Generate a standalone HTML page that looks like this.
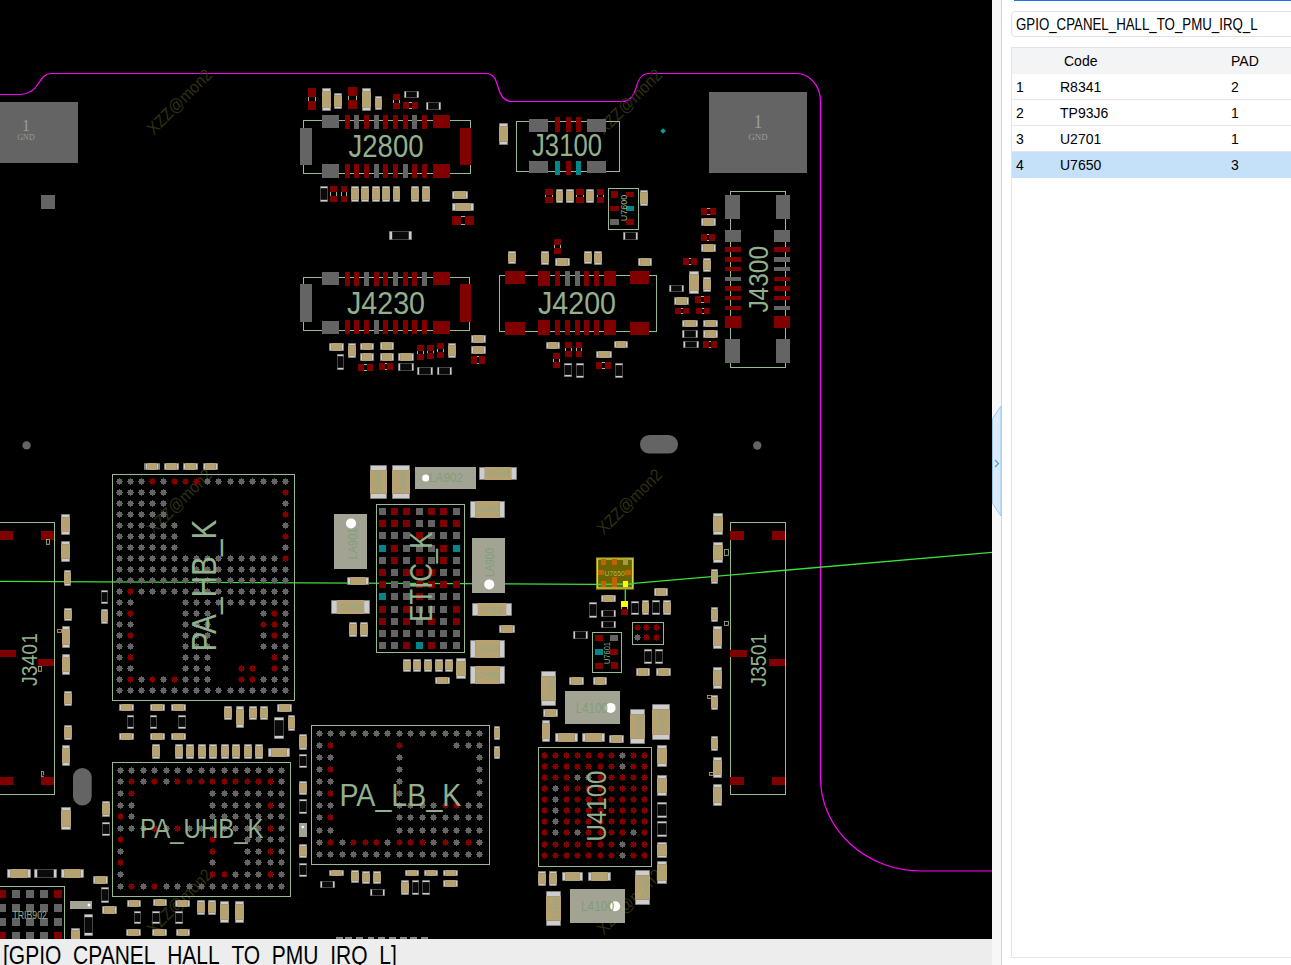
<!DOCTYPE html>
<html><head><meta charset="utf-8"><style>
html,body{margin:0;padding:0;width:1291px;height:965px;overflow:hidden;background:#fff;font-family:"Liberation Sans",sans-serif;}
#board{position:absolute;left:0;top:0;width:992px;height:939px;background:#000;}
#board svg{position:absolute;left:0;top:0;}
#status{position:absolute;left:0;top:939px;width:992px;height:26px;background:#ededed;white-space:nowrap;overflow:hidden;}
#strip{position:absolute;left:992px;top:0;width:9px;height:965px;background:#f7f7f7;border-right:1px solid #d4d4d4;}
#gap{position:absolute;left:1002px;top:0;width:9px;height:965px;background:#fff;border-right:1px solid #d9d9d9;}
#panel{position:absolute;left:1002px;top:0;width:289px;height:965px;background:#fff;}
#topline{position:absolute;left:1014px;top:0;width:277px;height:1px;background:#1a73e8;}
#combo{position:absolute;left:1011px;top:11px;width:290px;height:26px;border:1px solid #e0e0e0;border-radius:4px;background:#fff;font-size:16px;line-height:26px;padding-left:4px;box-sizing:border-box;}
#tbl{position:absolute;left:1011px;top:47px;width:290px;height:911px;border:1px solid #e4e4e4;background:#fff;box-sizing:border-box;}
.row{position:absolute;left:0;width:290px;height:26px;font-size:14px;line-height:26px;border-bottom:1px solid #e6e6e6;box-sizing:border-box;}
.row span{position:absolute;top:0;}
</style></head><body>
<div id="board"><svg width="992" height="939" viewBox="0 0 992 939" font-family="Liberation Sans">
<path d="M0,94.5 L20,94.5 C30,94.3 35,89 38,84 C42,78 45,73.5 51,73.5 L486,73.5 C494,73.5 496,80 498,87 C500,95 504,101.5 512,101.5 L622,101.5 C630,101.5 634,95 636,88 C638,80 641,73.5 649,73.5 L796.5,73.5 A24 28 0 0 1 820.5,101.5 L820.5,778 A101 93 0 0 0 921.5,871 L992,871" fill="none" stroke="#ff00ff" stroke-width="1.2"/>
<path d="M0,581.3 L596,584.4" stroke="#3ce03c" stroke-width="1.3" fill="none"/>
<path d="M633.6,583.4 L992,552.3" stroke="#3ce03c" stroke-width="1.3" fill="none"/>
<path d="M625.3,587 L625.3,601.4" stroke="#3ce03c" stroke-width="1.3" fill="none"/>
<text x="153.8" y="135.5" font-size="17" fill="#302f12" text-anchor="start" textLength="84" lengthAdjust="spacingAndGlyphs" transform="rotate(-45 153.8 135.5)" >XZZ@mon2</text>
<text x="603.8" y="135.5" font-size="17" fill="#302f12" text-anchor="start" textLength="84" lengthAdjust="spacingAndGlyphs" transform="rotate(-45 603.8 135.5)" >XZZ@mon2</text>
<text x="153.8" y="535.3" font-size="17" fill="#302f12" text-anchor="start" textLength="84" lengthAdjust="spacingAndGlyphs" transform="rotate(-45 153.8 535.3)" >XZZ@mon2</text>
<text x="603.8" y="535.3" font-size="17" fill="#302f12" text-anchor="start" textLength="84" lengthAdjust="spacingAndGlyphs" transform="rotate(-45 603.8 535.3)" >XZZ@mon2</text>
<text x="153.8" y="935.4" font-size="17" fill="#302f12" text-anchor="start" textLength="84" lengthAdjust="spacingAndGlyphs" transform="rotate(-45 153.8 935.4)" >XZZ@mon2</text>
<text x="603.8" y="935.4" font-size="17" fill="#302f12" text-anchor="start" textLength="84" lengthAdjust="spacingAndGlyphs" transform="rotate(-45 603.8 935.4)" >XZZ@mon2</text>
<rect x="0" y="102" width="78" height="61" fill="#646464"/>
<text x="26" y="131" font-size="16" fill="#9a9a9a" text-anchor="middle" font-family="Liberation Serif">1</text>
<text x="26" y="140" font-size="8" fill="#9a9a9a" text-anchor="middle" font-family="Liberation Serif">GND</text>
<rect x="41" y="195" width="14" height="14" fill="#646464"/>
<rect x="709" y="92" width="98" height="81" fill="#646464"/>
<text x="758" y="128" font-size="18" fill="#9a9a9a" text-anchor="middle" font-family="Liberation Serif">1</text>
<text x="758" y="140" font-size="9" fill="#9a9a9a" text-anchor="middle" font-family="Liberation Serif">GND</text>
<rect x="308.5" y="96.5" width="7" height="5" fill="none" stroke="#96ba92" stroke-width="1"/>
<rect x="308" y="88" width="8" height="9" fill="#800000"/>
<rect x="308" y="101" width="8" height="9" fill="#800000"/>
<rect x="322.0" y="88.0" width="9.0" height="23.0" fill="#5e5e5e"/>
<rect x="322.7" y="88.7" width="7.6" height="2.8" fill="#cdcdcd"/>
<rect x="322.7" y="107.5" width="7.6" height="2.8" fill="#cdcdcd"/>
<rect x="322.0" y="91.5" width="9.0" height="16.1" fill="#b6a171"/>
<rect x="334.0" y="93.0" width="8.0" height="16.0" fill="#5e5e5e"/>
<rect x="334.7" y="93.7" width="6.6" height="1.7" fill="#cdcdcd"/>
<rect x="334.7" y="106.6" width="6.6" height="1.7" fill="#cdcdcd"/>
<rect x="334.0" y="95.4" width="8.0" height="11.2" fill="#b6a171"/>
<rect x="348.5" y="95.5" width="8" height="5" fill="none" stroke="#96ba92" stroke-width="1"/>
<rect x="348" y="87" width="9" height="9" fill="#800000"/>
<rect x="348" y="100" width="9" height="9" fill="#800000"/>
<rect x="362.0" y="88.0" width="9.0" height="23.0" fill="#5e5e5e"/>
<rect x="362.7" y="88.7" width="7.6" height="2.8" fill="#cdcdcd"/>
<rect x="362.7" y="107.5" width="7.6" height="2.8" fill="#cdcdcd"/>
<rect x="362.0" y="91.5" width="9.0" height="16.1" fill="#b6a171"/>
<rect x="375.0" y="96.0" width="7.0" height="14.0" fill="#5e5e5e"/>
<rect x="375.7" y="96.7" width="5.6" height="1.5" fill="#cdcdcd"/>
<rect x="375.7" y="107.8" width="5.6" height="1.5" fill="#cdcdcd"/>
<rect x="375.0" y="98.2" width="7.0" height="9.6" fill="#b6a171"/>
<rect x="393.5" y="99.5" width="6" height="4" fill="none" stroke="#96ba92" stroke-width="1"/>
<rect x="393" y="94" width="7" height="6" fill="#800000"/>
<rect x="393" y="103" width="7" height="6" fill="#800000"/>
<rect x="404.0" y="91.0" width="15.0" height="7.0" fill="#5e5e5e"/>
<rect x="404.7" y="91.7" width="1.6" height="5.6" fill="#cdcdcd"/>
<rect x="416.8" y="91.7" width="1.6" height="5.6" fill="#cdcdcd"/>
<rect x="406.2" y="91.7" width="10.5" height="5.6" fill="#0a0a0a"/>
<rect x="408.5" y="102.5" width="4" height="6" fill="none" stroke="#96ba92" stroke-width="1"/>
<rect x="403" y="102" width="6" height="7" fill="#800000"/>
<rect x="412" y="102" width="6" height="7" fill="#800000"/>
<rect x="426.0" y="102.0" width="15.0" height="8.0" fill="#5e5e5e"/>
<rect x="426.7" y="102.7" width="1.6" height="6.6" fill="#cdcdcd"/>
<rect x="438.8" y="102.7" width="1.6" height="6.6" fill="#cdcdcd"/>
<rect x="428.2" y="102.7" width="10.5" height="6.6" fill="#0a0a0a"/>
<rect x="303.5" y="120.5" width="167" height="53" fill="none" stroke="#96ba92" stroke-width="1"/>
<rect x="300" y="128" width="12" height="37" fill="#646464"/>
<rect x="460" y="128" width="11" height="37" fill="#800000"/>
<rect x="322" y="115" width="17" height="13" fill="#646464"/>
<rect x="433" y="115" width="17" height="13" fill="#800000"/>
<rect x="322" y="164" width="17" height="14" fill="#646464"/>
<rect x="433" y="164" width="17" height="14" fill="#800000"/>
<rect x="345" y="115" width="5" height="14" fill="#800000"/>
<rect x="354" y="115" width="5" height="14" fill="#646464"/>
<rect x="364" y="115" width="5" height="14" fill="#800000"/>
<rect x="374" y="115" width="5" height="14" fill="#646464"/>
<rect x="383" y="115" width="5" height="14" fill="#800000"/>
<rect x="393" y="115" width="5" height="14" fill="#800000"/>
<rect x="403" y="115" width="5" height="14" fill="#800000"/>
<rect x="412" y="115" width="5" height="14" fill="#646464"/>
<rect x="422" y="115" width="5" height="14" fill="#800000"/>
<rect x="345" y="164" width="5" height="14" fill="#800000"/>
<rect x="354" y="164" width="5" height="14" fill="#800000"/>
<rect x="364" y="164" width="5" height="14" fill="#800000"/>
<rect x="374" y="164" width="5" height="14" fill="#646464"/>
<rect x="383" y="164" width="5" height="14" fill="#800000"/>
<rect x="393" y="164" width="5" height="14" fill="#800000"/>
<rect x="403" y="164" width="5" height="14" fill="#646464"/>
<rect x="412" y="164" width="5" height="14" fill="#800000"/>
<rect x="422" y="164" width="5" height="14" fill="#800000"/>
<text x="348.5" y="156.5" font-size="30.5" fill="#92b08c" text-anchor="start" textLength="75" lengthAdjust="spacingAndGlyphs" >J2800</text>
<rect x="320.0" y="186.0" width="8.0" height="16.0" fill="#5e5e5e"/>
<rect x="320.7" y="186.7" width="6.6" height="1.6" fill="#cdcdcd"/>
<rect x="320.7" y="199.7" width="6.6" height="1.6" fill="#cdcdcd"/>
<rect x="320.7" y="188.3" width="6.6" height="11.4" fill="#0a0a0a"/>
<rect x="330.5" y="191.5" width="6" height="5" fill="none" stroke="#96ba92" stroke-width="1"/>
<rect x="330" y="186" width="7" height="6" fill="#800000"/>
<rect x="330" y="196" width="7" height="6" fill="#800000"/>
<rect x="341.5" y="191.5" width="5" height="5" fill="none" stroke="#96ba92" stroke-width="1"/>
<rect x="341" y="186" width="6" height="6" fill="#800000"/>
<rect x="341" y="196" width="6" height="6" fill="#800000"/>
<rect x="351.0" y="186.0" width="8.0" height="16.0" fill="#5e5e5e"/>
<rect x="351.7" y="186.7" width="6.6" height="1.6" fill="#cdcdcd"/>
<rect x="351.7" y="199.7" width="6.6" height="1.6" fill="#cdcdcd"/>
<rect x="351.0" y="188.3" width="8.0" height="11.4" fill="#b6a171"/>
<rect x="361.0" y="186.0" width="8.0" height="16.0" fill="#5e5e5e"/>
<rect x="361.7" y="186.7" width="6.6" height="1.6" fill="#cdcdcd"/>
<rect x="361.7" y="199.7" width="6.6" height="1.6" fill="#cdcdcd"/>
<rect x="361.0" y="188.3" width="8.0" height="11.4" fill="#b6a171"/>
<rect x="372.0" y="186.0" width="8.0" height="16.0" fill="#5e5e5e"/>
<rect x="372.7" y="186.7" width="6.6" height="1.6" fill="#cdcdcd"/>
<rect x="372.7" y="199.7" width="6.6" height="1.6" fill="#cdcdcd"/>
<rect x="372.0" y="188.3" width="8.0" height="11.4" fill="#b6a171"/>
<rect x="382.0" y="186.0" width="8.0" height="16.0" fill="#5e5e5e"/>
<rect x="382.7" y="186.7" width="6.6" height="1.6" fill="#cdcdcd"/>
<rect x="382.7" y="199.7" width="6.6" height="1.6" fill="#cdcdcd"/>
<rect x="382.0" y="188.3" width="8.0" height="11.4" fill="#b6a171"/>
<rect x="393.0" y="186.0" width="7.0" height="16.0" fill="#5e5e5e"/>
<rect x="393.7" y="186.7" width="5.6" height="1.6" fill="#cdcdcd"/>
<rect x="393.7" y="199.7" width="5.6" height="1.6" fill="#cdcdcd"/>
<rect x="393.0" y="188.3" width="7.0" height="11.4" fill="#b6a171"/>
<rect x="411.0" y="186.0" width="8.0" height="16.0" fill="#5e5e5e"/>
<rect x="411.7" y="186.7" width="6.6" height="1.6" fill="#cdcdcd"/>
<rect x="411.7" y="199.7" width="6.6" height="1.6" fill="#cdcdcd"/>
<rect x="411.0" y="188.3" width="8.0" height="11.4" fill="#b6a171"/>
<rect x="422.0" y="186.0" width="8.0" height="16.0" fill="#5e5e5e"/>
<rect x="422.7" y="186.7" width="6.6" height="1.6" fill="#cdcdcd"/>
<rect x="422.7" y="199.7" width="6.6" height="1.6" fill="#cdcdcd"/>
<rect x="422.0" y="188.3" width="8.0" height="11.4" fill="#b6a171"/>
<rect x="452.0" y="191.0" width="16.0" height="8.0" fill="#5e5e5e"/>
<rect x="452.7" y="191.7" width="1.6" height="6.6" fill="#cdcdcd"/>
<rect x="465.8" y="191.7" width="1.6" height="6.6" fill="#cdcdcd"/>
<rect x="454.2" y="191.0" width="11.5" height="8.0" fill="#b6a171"/>
<rect x="452.0" y="203.0" width="22.0" height="8.0" fill="#5e5e5e"/>
<rect x="452.7" y="203.7" width="2.6" height="6.6" fill="#cdcdcd"/>
<rect x="470.7" y="203.7" width="2.6" height="6.6" fill="#cdcdcd"/>
<rect x="455.3" y="203.0" width="15.3" height="8.0" fill="#b6a171"/>
<rect x="460.5" y="216.5" width="5" height="8" fill="none" stroke="#96ba92" stroke-width="1"/>
<rect x="452" y="216" width="9" height="9" fill="#800000"/>
<rect x="465" y="216" width="9" height="9" fill="#800000"/>
<rect x="389.0" y="231.0" width="23.0" height="9.0" fill="#5e5e5e"/>
<rect x="389.7" y="231.7" width="2.6" height="7.6" fill="#cdcdcd"/>
<rect x="408.7" y="231.7" width="2.6" height="7.6" fill="#cdcdcd"/>
<rect x="392.3" y="231.7" width="16.3" height="7.6" fill="#0a0a0a"/>
<rect x="499.0" y="123.0" width="9.0" height="22.0" fill="#5e5e5e"/>
<rect x="499.7" y="123.7" width="7.6" height="2.6" fill="#cdcdcd"/>
<rect x="499.7" y="141.7" width="7.6" height="2.6" fill="#cdcdcd"/>
<rect x="499.0" y="126.3" width="9.0" height="15.3" fill="#b6a171"/>
<rect x="516.5" y="121.5" width="103" height="50" fill="none" stroke="#96ba92" stroke-width="1"/>
<rect x="529" y="119" width="19" height="13" fill="#646464"/>
<rect x="587" y="119" width="19" height="13" fill="#646464"/>
<rect x="555" y="117" width="5" height="15" fill="#800000"/>
<rect x="566" y="117" width="5" height="15" fill="#800000"/>
<rect x="576" y="117" width="5" height="15" fill="#800000"/>
<rect x="529" y="161" width="19" height="12" fill="#646464"/>
<rect x="587" y="161" width="19" height="12" fill="#646464"/>
<rect x="555" y="161" width="5" height="14" fill="#00868b"/>
<rect x="566" y="161" width="5" height="14" fill="#800000"/>
<rect x="576" y="161" width="5" height="14" fill="#00868b"/>
<text x="532" y="156" font-size="30.5" fill="#92b08c" text-anchor="start" textLength="70" lengthAdjust="spacingAndGlyphs" >J3100</text>
<rect x="661" y="129" width="4" height="4" fill="#00a0a0" transform="rotate(45 663 131)"/>
<rect x="545.5" y="194.5" width="7" height="3" fill="none" stroke="#96ba92" stroke-width="1"/>
<rect x="545" y="189" width="8" height="6" fill="#800000"/>
<rect x="545" y="197" width="8" height="6" fill="#800000"/>
<rect x="556.0" y="189.0" width="7.0" height="14.0" fill="#5e5e5e"/>
<rect x="556.7" y="189.7" width="5.6" height="1.5" fill="#cdcdcd"/>
<rect x="556.7" y="200.8" width="5.6" height="1.5" fill="#cdcdcd"/>
<rect x="556.0" y="191.2" width="7.0" height="9.6" fill="#b6a171"/>
<rect x="566.0" y="189.0" width="8.0" height="14.0" fill="#5e5e5e"/>
<rect x="566.7" y="189.7" width="6.6" height="1.5" fill="#cdcdcd"/>
<rect x="566.7" y="200.8" width="6.6" height="1.5" fill="#cdcdcd"/>
<rect x="566.0" y="191.2" width="8.0" height="9.6" fill="#b6a171"/>
<rect x="576.5" y="194.5" width="7" height="3" fill="none" stroke="#96ba92" stroke-width="1"/>
<rect x="576" y="189" width="8" height="6" fill="#800000"/>
<rect x="576" y="197" width="8" height="6" fill="#800000"/>
<rect x="586.0" y="189.0" width="8.0" height="14.0" fill="#5e5e5e"/>
<rect x="586.7" y="189.7" width="6.6" height="1.5" fill="#cdcdcd"/>
<rect x="586.7" y="200.8" width="6.6" height="1.5" fill="#cdcdcd"/>
<rect x="586.0" y="191.2" width="8.0" height="9.6" fill="#b6a171"/>
<rect x="597.5" y="194.5" width="6" height="3" fill="none" stroke="#96ba92" stroke-width="1"/>
<rect x="597" y="189" width="7" height="6" fill="#800000"/>
<rect x="597" y="197" width="7" height="6" fill="#800000"/>
<rect x="608.5" y="188.5" width="30" height="41" fill="none" stroke="#96ba92" stroke-width="1"/>
<rect x="611" y="191" width="7" height="7" fill="#800000"/>
<rect x="626" y="192" width="8" height="5" fill="#800000"/>
<rect x="610" y="206" width="9" height="5" fill="#800000"/>
<rect x="626" y="206" width="8" height="5" fill="#00868b"/>
<rect x="610" y="219" width="9" height="6" fill="#646464"/>
<rect x="626" y="219" width="8" height="6" fill="#800000"/>
<text x="627" y="208" font-size="9" fill="#92b08c" text-anchor="middle" transform="rotate(-90 627 208)" >U7600</text>
<rect x="640.0" y="190.0" width="8.0" height="16.0" fill="#5e5e5e"/>
<rect x="640.7" y="190.7" width="6.6" height="1.6" fill="#cdcdcd"/>
<rect x="640.7" y="203.7" width="6.6" height="1.6" fill="#cdcdcd"/>
<rect x="640.0" y="192.3" width="8.0" height="11.4" fill="#b6a171"/>
<rect x="623.0" y="232.0" width="15.0" height="8.0" fill="#5e5e5e"/>
<rect x="623.7" y="232.7" width="1.6" height="6.6" fill="#cdcdcd"/>
<rect x="635.7" y="232.7" width="1.6" height="6.6" fill="#cdcdcd"/>
<rect x="625.3" y="232.7" width="10.5" height="6.6" fill="#0a0a0a"/>
<rect x="554.5" y="244.5" width="6" height="4" fill="none" stroke="#96ba92" stroke-width="1"/>
<rect x="554" y="239" width="7" height="6" fill="#800000"/>
<rect x="554" y="248" width="7" height="6" fill="#800000"/>
<rect x="303.5" y="277.5" width="166" height="53" fill="none" stroke="#96ba92" stroke-width="1"/>
<rect x="300" y="284" width="12" height="38" fill="#646464"/>
<rect x="460" y="284" width="11" height="38" fill="#800000"/>
<rect x="322" y="272" width="17" height="13" fill="#646464"/>
<rect x="433" y="272" width="17" height="13" fill="#800000"/>
<rect x="322" y="321" width="17" height="13" fill="#646464"/>
<rect x="433" y="321" width="17" height="13" fill="#800000"/>
<rect x="345" y="272" width="5" height="14" fill="#800000"/>
<rect x="354" y="272" width="5" height="14" fill="#800000"/>
<rect x="364" y="272" width="5" height="14" fill="#646464"/>
<rect x="374" y="272" width="5" height="14" fill="#800000"/>
<rect x="383" y="272" width="5" height="14" fill="#800000"/>
<rect x="393" y="272" width="5" height="14" fill="#646464"/>
<rect x="403" y="272" width="5" height="14" fill="#800000"/>
<rect x="412" y="272" width="5" height="14" fill="#800000"/>
<rect x="422" y="272" width="5" height="14" fill="#646464"/>
<rect x="345" y="320" width="5" height="14" fill="#800000"/>
<rect x="354" y="320" width="5" height="14" fill="#800000"/>
<rect x="364" y="320" width="5" height="14" fill="#800000"/>
<rect x="374" y="320" width="5" height="14" fill="#646464"/>
<rect x="383" y="320" width="5" height="14" fill="#800000"/>
<rect x="393" y="320" width="5" height="14" fill="#800000"/>
<rect x="403" y="320" width="5" height="14" fill="#800000"/>
<rect x="412" y="320" width="5" height="14" fill="#800000"/>
<rect x="422" y="320" width="5" height="14" fill="#800000"/>
<text x="347" y="314" font-size="31" fill="#92b08c" text-anchor="start" textLength="78" lengthAdjust="spacingAndGlyphs" >J4230</text>
<rect x="329.0" y="343.0" width="15.0" height="8.0" fill="#5e5e5e"/>
<rect x="329.7" y="343.7" width="1.6" height="6.6" fill="#cdcdcd"/>
<rect x="341.7" y="343.7" width="1.6" height="6.6" fill="#cdcdcd"/>
<rect x="331.3" y="343.0" width="10.5" height="8.0" fill="#b6a171"/>
<rect x="348.0" y="343.0" width="8.0" height="15.0" fill="#5e5e5e"/>
<rect x="348.7" y="343.7" width="6.6" height="1.6" fill="#cdcdcd"/>
<rect x="348.7" y="355.7" width="6.6" height="1.6" fill="#cdcdcd"/>
<rect x="348.0" y="345.3" width="8.0" height="10.5" fill="#b6a171"/>
<rect x="337.0" y="354.0" width="7.0" height="16.0" fill="#5e5e5e"/>
<rect x="337.7" y="354.7" width="5.6" height="1.6" fill="#cdcdcd"/>
<rect x="337.7" y="367.7" width="5.6" height="1.6" fill="#cdcdcd"/>
<rect x="337.7" y="356.3" width="5.6" height="11.4" fill="#0a0a0a"/>
<rect x="360.0" y="343.0" width="14.0" height="7.0" fill="#5e5e5e"/>
<rect x="360.7" y="343.7" width="1.5" height="5.6" fill="#cdcdcd"/>
<rect x="371.8" y="343.7" width="1.5" height="5.6" fill="#cdcdcd"/>
<rect x="362.2" y="343.0" width="9.6" height="7.0" fill="#b6a171"/>
<rect x="360.0" y="353.0" width="14.0" height="8.0" fill="#5e5e5e"/>
<rect x="360.7" y="353.7" width="1.5" height="6.6" fill="#cdcdcd"/>
<rect x="371.8" y="353.7" width="1.5" height="6.6" fill="#cdcdcd"/>
<rect x="362.2" y="353.0" width="9.6" height="8.0" fill="#b6a171"/>
<rect x="363.5" y="364.5" width="4" height="6" fill="none" stroke="#96ba92" stroke-width="1"/>
<rect x="358" y="364" width="6" height="7" fill="#800000"/>
<rect x="367" y="364" width="6" height="7" fill="#800000"/>
<rect x="380.0" y="342.0" width="14.0" height="8.0" fill="#5e5e5e"/>
<rect x="380.7" y="342.7" width="1.5" height="6.6" fill="#cdcdcd"/>
<rect x="391.8" y="342.7" width="1.5" height="6.6" fill="#cdcdcd"/>
<rect x="382.2" y="342.0" width="9.6" height="8.0" fill="#b6a171"/>
<rect x="380.0" y="353.0" width="14.0" height="8.0" fill="#5e5e5e"/>
<rect x="380.7" y="353.7" width="1.5" height="6.6" fill="#cdcdcd"/>
<rect x="391.8" y="353.7" width="1.5" height="6.6" fill="#cdcdcd"/>
<rect x="382.2" y="353.0" width="9.6" height="8.0" fill="#b6a171"/>
<rect x="384.5" y="363.5" width="3" height="6" fill="none" stroke="#96ba92" stroke-width="1"/>
<rect x="379" y="363" width="6" height="7" fill="#800000"/>
<rect x="387" y="363" width="6" height="7" fill="#800000"/>
<rect x="398.0" y="353.0" width="16.0" height="8.0" fill="#5e5e5e"/>
<rect x="398.7" y="353.7" width="1.6" height="6.6" fill="#cdcdcd"/>
<rect x="411.7" y="353.7" width="1.6" height="6.6" fill="#cdcdcd"/>
<rect x="400.3" y="353.0" width="11.5" height="8.0" fill="#b6a171"/>
<rect x="398.0" y="363.0" width="16.0" height="8.0" fill="#5e5e5e"/>
<rect x="398.7" y="363.7" width="1.6" height="6.6" fill="#cdcdcd"/>
<rect x="411.7" y="363.7" width="1.6" height="6.6" fill="#cdcdcd"/>
<rect x="400.3" y="363.7" width="11.5" height="6.6" fill="#0a0a0a"/>
<rect x="417.5" y="350.5" width="6" height="4" fill="none" stroke="#96ba92" stroke-width="1"/>
<rect x="417" y="345" width="7" height="6" fill="#800000"/>
<rect x="417" y="354" width="7" height="6" fill="#800000"/>
<rect x="427.5" y="350.5" width="6" height="3" fill="none" stroke="#96ba92" stroke-width="1"/>
<rect x="427" y="345" width="7" height="6" fill="#800000"/>
<rect x="427" y="353" width="7" height="6" fill="#800000"/>
<rect x="437.5" y="348.5" width="6" height="4" fill="none" stroke="#96ba92" stroke-width="1"/>
<rect x="437" y="343" width="7" height="6" fill="#800000"/>
<rect x="437" y="352" width="7" height="6" fill="#800000"/>
<rect x="448.0" y="343.0" width="8.0" height="15.0" fill="#5e5e5e"/>
<rect x="448.7" y="343.7" width="6.6" height="1.6" fill="#cdcdcd"/>
<rect x="448.7" y="355.7" width="6.6" height="1.6" fill="#cdcdcd"/>
<rect x="448.0" y="345.3" width="8.0" height="10.4" fill="#b6a171"/>
<rect x="417.0" y="367.0" width="16.0" height="8.0" fill="#5e5e5e"/>
<rect x="417.7" y="367.7" width="1.6" height="6.6" fill="#cdcdcd"/>
<rect x="430.7" y="367.7" width="1.6" height="6.6" fill="#cdcdcd"/>
<rect x="419.3" y="367.7" width="11.4" height="6.6" fill="#0a0a0a"/>
<rect x="437.0" y="367.0" width="15.0" height="8.0" fill="#5e5e5e"/>
<rect x="437.7" y="367.7" width="1.5" height="6.6" fill="#cdcdcd"/>
<rect x="449.8" y="367.7" width="1.5" height="6.6" fill="#cdcdcd"/>
<rect x="439.2" y="367.7" width="10.6" height="6.6" fill="#0a0a0a"/>
<rect x="471.0" y="335.0" width="15.0" height="8.0" fill="#5e5e5e"/>
<rect x="471.7" y="335.7" width="1.5" height="6.6" fill="#cdcdcd"/>
<rect x="483.8" y="335.7" width="1.5" height="6.6" fill="#cdcdcd"/>
<rect x="473.2" y="335.0" width="10.6" height="8.0" fill="#b6a171"/>
<rect x="471.0" y="346.0" width="15.0" height="8.0" fill="#5e5e5e"/>
<rect x="471.7" y="346.7" width="1.5" height="6.6" fill="#cdcdcd"/>
<rect x="483.8" y="346.7" width="1.5" height="6.6" fill="#cdcdcd"/>
<rect x="473.2" y="346.0" width="10.6" height="8.0" fill="#b6a171"/>
<rect x="476.5" y="356.5" width="3" height="7" fill="none" stroke="#96ba92" stroke-width="1"/>
<rect x="471" y="356" width="6" height="8" fill="#800000"/>
<rect x="479" y="356" width="6" height="8" fill="#800000"/>
<rect x="499.5" y="275.5" width="157" height="56" fill="none" stroke="#96ba92" stroke-width="1"/>
<rect x="505" y="271" width="20" height="13" fill="#800000"/>
<rect x="538" y="271" width="12" height="15" fill="#800000"/>
<rect x="604" y="271" width="12" height="15" fill="#800000"/>
<rect x="630" y="271" width="19" height="13" fill="#800000"/>
<rect x="555" y="271" width="5" height="15" fill="#800000"/>
<rect x="565" y="271" width="5" height="15" fill="#646464"/>
<rect x="575" y="271" width="5" height="15" fill="#646464"/>
<rect x="584" y="271" width="5" height="15" fill="#800000"/>
<rect x="594" y="271" width="5" height="15" fill="#800000"/>
<rect x="505" y="322" width="20" height="13" fill="#800000"/>
<rect x="538" y="320" width="12" height="15" fill="#800000"/>
<rect x="604" y="320" width="12" height="15" fill="#800000"/>
<rect x="630" y="322" width="19" height="13" fill="#800000"/>
<rect x="555" y="320" width="5" height="15" fill="#800000"/>
<rect x="565" y="320" width="5" height="15" fill="#800000"/>
<rect x="575" y="320" width="5" height="15" fill="#800000"/>
<rect x="584" y="320" width="5" height="15" fill="#800000"/>
<rect x="594" y="320" width="5" height="15" fill="#800000"/>
<text x="538" y="313.7" font-size="30.5" fill="#92b08c" text-anchor="start" textLength="78" lengthAdjust="spacingAndGlyphs" >J4200</text>
<rect x="508.0" y="251.0" width="8.0" height="13.0" fill="#5e5e5e"/>
<rect x="508.7" y="251.7" width="6.6" height="1.5" fill="#cdcdcd"/>
<rect x="508.7" y="261.8" width="6.6" height="1.5" fill="#cdcdcd"/>
<rect x="508.0" y="253.2" width="8.0" height="8.6" fill="#b6a171"/>
<rect x="541.0" y="251.0" width="8.0" height="14.0" fill="#5e5e5e"/>
<rect x="541.7" y="251.7" width="6.6" height="1.5" fill="#cdcdcd"/>
<rect x="541.7" y="262.8" width="6.6" height="1.5" fill="#cdcdcd"/>
<rect x="541.0" y="253.2" width="8.0" height="9.6" fill="#b6a171"/>
<rect x="555.0" y="258.0" width="15.0" height="8.0" fill="#5e5e5e"/>
<rect x="555.7" y="258.7" width="1.5" height="6.6" fill="#cdcdcd"/>
<rect x="567.8" y="258.7" width="1.5" height="6.6" fill="#cdcdcd"/>
<rect x="557.2" y="258.0" width="10.5" height="8.0" fill="#b6a171"/>
<rect x="584.0" y="251.0" width="8.0" height="13.0" fill="#5e5e5e"/>
<rect x="584.7" y="251.7" width="6.6" height="1.5" fill="#cdcdcd"/>
<rect x="584.7" y="261.8" width="6.6" height="1.5" fill="#cdcdcd"/>
<rect x="584.0" y="253.2" width="8.0" height="8.6" fill="#b6a171"/>
<rect x="594.0" y="251.0" width="8.0" height="14.0" fill="#5e5e5e"/>
<rect x="594.7" y="251.7" width="6.6" height="1.5" fill="#cdcdcd"/>
<rect x="594.7" y="262.8" width="6.6" height="1.5" fill="#cdcdcd"/>
<rect x="594.0" y="253.2" width="8.0" height="9.6" fill="#b6a171"/>
<rect x="638.0" y="258.0" width="14.0" height="8.0" fill="#5e5e5e"/>
<rect x="638.7" y="258.7" width="1.5" height="6.6" fill="#cdcdcd"/>
<rect x="649.8" y="258.7" width="1.5" height="6.6" fill="#cdcdcd"/>
<rect x="640.2" y="258.0" width="9.6" height="8.0" fill="#b6a171"/>
<rect x="546.0" y="342.0" width="14.0" height="7.0" fill="#5e5e5e"/>
<rect x="546.7" y="342.7" width="1.5" height="5.6" fill="#cdcdcd"/>
<rect x="557.8" y="342.7" width="1.5" height="5.6" fill="#cdcdcd"/>
<rect x="548.2" y="342.0" width="9.5" height="7.0" fill="#b6a171"/>
<rect x="565.5" y="347.5" width="6" height="4" fill="none" stroke="#96ba92" stroke-width="1"/>
<rect x="565" y="342" width="7" height="6" fill="#800000"/>
<rect x="565" y="351" width="7" height="6" fill="#800000"/>
<rect x="576.5" y="347.5" width="5" height="4" fill="none" stroke="#96ba92" stroke-width="1"/>
<rect x="576" y="342" width="6" height="6" fill="#800000"/>
<rect x="576" y="351" width="6" height="6" fill="#800000"/>
<rect x="553.5" y="358.5" width="6" height="4" fill="none" stroke="#96ba92" stroke-width="1"/>
<rect x="553" y="353" width="7" height="6" fill="#800000"/>
<rect x="553" y="362" width="7" height="6" fill="#800000"/>
<rect x="564.0" y="363.0" width="8.0" height="14.0" fill="#5e5e5e"/>
<rect x="564.7" y="363.7" width="6.6" height="1.5" fill="#cdcdcd"/>
<rect x="564.7" y="374.8" width="6.6" height="1.5" fill="#cdcdcd"/>
<rect x="564.7" y="365.2" width="6.6" height="9.6" fill="#0a0a0a"/>
<rect x="576.0" y="363.0" width="8.0" height="15.0" fill="#5e5e5e"/>
<rect x="576.7" y="363.7" width="6.6" height="1.6" fill="#cdcdcd"/>
<rect x="576.7" y="375.7" width="6.6" height="1.6" fill="#cdcdcd"/>
<rect x="576.7" y="365.3" width="6.6" height="10.5" fill="#0a0a0a"/>
<rect x="596.0" y="351.0" width="16.0" height="7.0" fill="#5e5e5e"/>
<rect x="596.7" y="351.7" width="1.7" height="5.6" fill="#cdcdcd"/>
<rect x="609.6" y="351.7" width="1.7" height="5.6" fill="#cdcdcd"/>
<rect x="598.4" y="351.0" width="11.3" height="7.0" fill="#b6a171"/>
<rect x="601.5" y="362.5" width="4" height="6" fill="none" stroke="#96ba92" stroke-width="1"/>
<rect x="596" y="362" width="6" height="7" fill="#800000"/>
<rect x="605" y="362" width="6" height="7" fill="#800000"/>
<rect x="615.0" y="363.0" width="8.0" height="15.0" fill="#5e5e5e"/>
<rect x="615.7" y="363.7" width="6.6" height="1.5" fill="#cdcdcd"/>
<rect x="615.7" y="375.8" width="6.6" height="1.5" fill="#cdcdcd"/>
<rect x="615.7" y="365.2" width="6.6" height="10.6" fill="#0a0a0a"/>
<rect x="614.0" y="341.0" width="14.0" height="7.0" fill="#5e5e5e"/>
<rect x="614.7" y="341.7" width="1.5" height="5.6" fill="#cdcdcd"/>
<rect x="625.8" y="341.7" width="1.5" height="5.6" fill="#cdcdcd"/>
<rect x="616.2" y="341.0" width="9.5" height="7.0" fill="#b6a171"/>
<rect x="730.5" y="191.5" width="55" height="176" fill="none" stroke="#96ba92" stroke-width="1"/>
<rect x="725" y="195" width="15" height="24" fill="#646464"/>
<rect x="776" y="195" width="14" height="24" fill="#646464"/>
<rect x="725" y="230" width="16" height="12" fill="#646464"/>
<rect x="774" y="230" width="16" height="12" fill="#646464"/>
<rect x="725" y="247" width="16" height="5" fill="#800000"/>
<rect x="774" y="247" width="16" height="5" fill="#800000"/>
<rect x="725" y="257" width="16" height="5" fill="#800000"/>
<rect x="774" y="257" width="16" height="5" fill="#646464"/>
<rect x="725" y="267" width="16" height="4" fill="#800000"/>
<rect x="774" y="267" width="16" height="4" fill="#646464"/>
<rect x="725" y="277" width="16" height="4" fill="#646464"/>
<rect x="774" y="277" width="16" height="4" fill="#800000"/>
<rect x="725" y="286" width="16" height="5" fill="#800000"/>
<rect x="774" y="286" width="16" height="5" fill="#800000"/>
<rect x="725" y="296" width="16" height="4" fill="#800000"/>
<rect x="774" y="296" width="16" height="4" fill="#800000"/>
<rect x="725" y="306" width="16" height="4" fill="#800000"/>
<rect x="774" y="306" width="16" height="4" fill="#646464"/>
<rect x="725" y="316" width="16" height="12" fill="#800000"/>
<rect x="774" y="316" width="16" height="12" fill="#800000"/>
<rect x="725" y="339" width="15" height="24" fill="#646464"/>
<rect x="776" y="339" width="14" height="24" fill="#646464"/>
<text x="768.5" y="312.6" font-size="27" fill="#92b08c" text-anchor="start" textLength="66.6" lengthAdjust="spacingAndGlyphs" transform="rotate(-90 768.5 312.6)" >J4300</text>
<rect x="706.5" y="208.5" width="4" height="6" fill="none" stroke="#96ba92" stroke-width="1"/>
<rect x="701" y="208" width="6" height="7" fill="#800000"/>
<rect x="710" y="208" width="6" height="7" fill="#800000"/>
<rect x="701.0" y="218.0" width="15.0" height="8.0" fill="#5e5e5e"/>
<rect x="701.7" y="218.7" width="1.7" height="6.6" fill="#cdcdcd"/>
<rect x="713.6" y="218.7" width="1.7" height="6.6" fill="#cdcdcd"/>
<rect x="703.4" y="218.0" width="10.3" height="8.0" fill="#b6a171"/>
<rect x="706.5" y="234.5" width="3" height="6" fill="none" stroke="#96ba92" stroke-width="1"/>
<rect x="701" y="234" width="6" height="7" fill="#800000"/>
<rect x="709" y="234" width="6" height="7" fill="#800000"/>
<rect x="701.0" y="244.0" width="15.0" height="8.0" fill="#5e5e5e"/>
<rect x="701.7" y="244.7" width="1.6" height="6.6" fill="#cdcdcd"/>
<rect x="713.7" y="244.7" width="1.6" height="6.6" fill="#cdcdcd"/>
<rect x="703.3" y="244.0" width="10.4" height="8.0" fill="#b6a171"/>
<rect x="688.5" y="258.5" width="3" height="6" fill="none" stroke="#96ba92" stroke-width="1"/>
<rect x="683" y="258" width="6" height="7" fill="#800000"/>
<rect x="691" y="258" width="6" height="7" fill="#800000"/>
<rect x="703.0" y="258.0" width="8.0" height="14.0" fill="#5e5e5e"/>
<rect x="703.7" y="258.7" width="6.6" height="1.5" fill="#cdcdcd"/>
<rect x="703.7" y="269.8" width="6.6" height="1.5" fill="#cdcdcd"/>
<rect x="703.0" y="260.2" width="8.0" height="9.6" fill="#b6a171"/>
<rect x="689.0" y="271.0" width="10.0" height="23.0" fill="#5e5e5e"/>
<rect x="689.7" y="271.7" width="8.6" height="2.7" fill="#cdcdcd"/>
<rect x="689.7" y="290.6" width="8.6" height="2.7" fill="#cdcdcd"/>
<rect x="689.0" y="274.4" width="10.0" height="16.3" fill="#b6a171"/>
<rect x="703.0" y="277.0" width="8.0" height="15.0" fill="#5e5e5e"/>
<rect x="703.7" y="277.7" width="6.6" height="1.6" fill="#cdcdcd"/>
<rect x="703.7" y="289.7" width="6.6" height="1.6" fill="#cdcdcd"/>
<rect x="703.0" y="279.3" width="8.0" height="10.4" fill="#b6a171"/>
<rect x="669.0" y="285.0" width="15.0" height="7.0" fill="#5e5e5e"/>
<rect x="669.7" y="285.7" width="1.5" height="5.6" fill="#cdcdcd"/>
<rect x="681.8" y="285.7" width="1.5" height="5.6" fill="#cdcdcd"/>
<rect x="671.2" y="285.7" width="10.6" height="5.6" fill="#0a0a0a"/>
<rect x="674.0" y="297.0" width="15.0" height="8.0" fill="#5e5e5e"/>
<rect x="674.7" y="297.7" width="1.6" height="6.6" fill="#cdcdcd"/>
<rect x="686.7" y="297.7" width="1.6" height="6.6" fill="#cdcdcd"/>
<rect x="676.3" y="297.0" width="10.4" height="8.0" fill="#b6a171"/>
<rect x="700.5" y="296.5" width="4" height="6" fill="none" stroke="#96ba92" stroke-width="1"/>
<rect x="695" y="296" width="6" height="7" fill="#800000"/>
<rect x="704" y="296" width="6" height="7" fill="#800000"/>
<rect x="680.5" y="308.5" width="3" height="5" fill="none" stroke="#96ba92" stroke-width="1"/>
<rect x="675" y="308" width="6" height="6" fill="#800000"/>
<rect x="683" y="308" width="6" height="6" fill="#800000"/>
<rect x="701.5" y="308.5" width="3" height="5" fill="none" stroke="#96ba92" stroke-width="1"/>
<rect x="696" y="308" width="6" height="6" fill="#800000"/>
<rect x="704" y="308" width="6" height="6" fill="#800000"/>
<rect x="682.0" y="320.0" width="16.0" height="7.0" fill="#5e5e5e"/>
<rect x="682.7" y="320.7" width="1.7" height="5.6" fill="#cdcdcd"/>
<rect x="695.6" y="320.7" width="1.7" height="5.6" fill="#cdcdcd"/>
<rect x="684.4" y="320.0" width="11.3" height="7.0" fill="#b6a171"/>
<rect x="703.0" y="320.0" width="15.0" height="7.0" fill="#5e5e5e"/>
<rect x="703.7" y="320.7" width="1.5" height="5.6" fill="#cdcdcd"/>
<rect x="715.8" y="320.7" width="1.5" height="5.6" fill="#cdcdcd"/>
<rect x="705.2" y="320.0" width="10.6" height="7.0" fill="#b6a171"/>
<rect x="682.0" y="330.0" width="16.0" height="8.0" fill="#5e5e5e"/>
<rect x="682.7" y="330.7" width="1.7" height="6.6" fill="#cdcdcd"/>
<rect x="695.6" y="330.7" width="1.7" height="6.6" fill="#cdcdcd"/>
<rect x="684.4" y="330.7" width="11.3" height="6.6" fill="#0a0a0a"/>
<rect x="703.0" y="330.0" width="15.0" height="8.0" fill="#5e5e5e"/>
<rect x="703.7" y="330.7" width="1.5" height="6.6" fill="#cdcdcd"/>
<rect x="715.8" y="330.7" width="1.5" height="6.6" fill="#cdcdcd"/>
<rect x="705.2" y="330.0" width="10.6" height="8.0" fill="#b6a171"/>
<rect x="683.0" y="341.0" width="16.0" height="7.0" fill="#5e5e5e"/>
<rect x="683.7" y="341.7" width="1.7" height="5.6" fill="#cdcdcd"/>
<rect x="696.6" y="341.7" width="1.7" height="5.6" fill="#cdcdcd"/>
<rect x="685.4" y="341.7" width="11.2" height="5.6" fill="#0a0a0a"/>
<rect x="708.5" y="341.5" width="3" height="6" fill="none" stroke="#96ba92" stroke-width="1"/>
<rect x="703" y="341" width="6" height="7" fill="#800000"/>
<rect x="711" y="341" width="6" height="7" fill="#800000"/>
<circle cx="26.6" cy="445.4" r="4.2" fill="#646464"/>
<circle cx="757.3" cy="445.5" r="4.2" fill="#646464"/>
<rect x="640" y="435" width="38" height="18.6" rx="9.3" fill="#646464"/>
<rect x="73" y="768" width="18.7" height="37.5" rx="9.3" fill="#646464"/>
<rect x="-4.5" y="522.5" width="59" height="272" fill="none" stroke="#96ba92" stroke-width="1"/>
<rect x="0" y="531" width="13" height="9" fill="#800000"/>
<rect x="41" y="531" width="13" height="9" fill="#800000"/>
<rect x="0" y="650" width="16" height="7" fill="#800000"/>
<rect x="38" y="659" width="16" height="7" fill="#800000"/>
<rect x="0" y="777" width="13" height="8" fill="#800000"/>
<rect x="41" y="777" width="13" height="8" fill="#800000"/>
<text x="36.5" y="686" font-size="22.5" fill="#92b08c" text-anchor="start" textLength="53" lengthAdjust="spacingAndGlyphs" transform="rotate(-90 36.5 686)" >J3401</text>
<rect x="61.0" y="514.0" width="9.0" height="21.0" fill="#5e5e5e"/>
<rect x="61.7" y="514.7" width="7.6" height="2.6" fill="#cdcdcd"/>
<rect x="61.7" y="531.7" width="7.6" height="2.6" fill="#cdcdcd"/>
<rect x="61.0" y="517.3" width="9.0" height="14.5" fill="#b6a171"/>
<rect x="61.0" y="541.0" width="9.0" height="21.0" fill="#5e5e5e"/>
<rect x="61.7" y="541.7" width="7.6" height="2.5" fill="#cdcdcd"/>
<rect x="61.7" y="558.8" width="7.6" height="2.5" fill="#cdcdcd"/>
<rect x="61.0" y="544.2" width="9.0" height="14.5" fill="#b6a171"/>
<rect x="64.0" y="570.0" width="7.0" height="16.0" fill="#5e5e5e"/>
<rect x="64.7" y="570.7" width="5.6" height="1.6" fill="#cdcdcd"/>
<rect x="64.7" y="583.7" width="5.6" height="1.6" fill="#cdcdcd"/>
<rect x="64.0" y="572.3" width="7.0" height="11.4" fill="#b6a171"/>
<rect x="64.0" y="608.0" width="8.0" height="13.0" fill="#5e5e5e"/>
<rect x="64.7" y="608.7" width="6.6" height="1.5" fill="#cdcdcd"/>
<rect x="64.7" y="618.8" width="6.6" height="1.5" fill="#cdcdcd"/>
<rect x="64.0" y="610.2" width="8.0" height="8.6" fill="#b6a171"/>
<rect x="62.0" y="626.0" width="8.0" height="22.0" fill="#5e5e5e"/>
<rect x="62.7" y="626.7" width="6.6" height="2.5" fill="#cdcdcd"/>
<rect x="62.7" y="644.8" width="6.6" height="2.5" fill="#cdcdcd"/>
<rect x="62.0" y="629.2" width="8.0" height="15.5" fill="#b6a171"/>
<rect x="62.0" y="654.0" width="8.0" height="21.0" fill="#5e5e5e"/>
<rect x="62.7" y="654.7" width="6.6" height="2.5" fill="#cdcdcd"/>
<rect x="62.7" y="671.8" width="6.6" height="2.5" fill="#cdcdcd"/>
<rect x="62.0" y="657.2" width="8.0" height="14.5" fill="#b6a171"/>
<rect x="64.0" y="691.0" width="8.0" height="15.0" fill="#5e5e5e"/>
<rect x="64.7" y="691.7" width="6.6" height="1.6" fill="#cdcdcd"/>
<rect x="64.7" y="703.7" width="6.6" height="1.6" fill="#cdcdcd"/>
<rect x="64.0" y="693.3" width="8.0" height="10.5" fill="#b6a171"/>
<rect x="64.0" y="725.0" width="8.0" height="15.0" fill="#5e5e5e"/>
<rect x="64.7" y="725.7" width="6.6" height="1.5" fill="#cdcdcd"/>
<rect x="64.7" y="737.8" width="6.6" height="1.5" fill="#cdcdcd"/>
<rect x="64.0" y="727.2" width="8.0" height="10.6" fill="#b6a171"/>
<rect x="62.0" y="745.0" width="8.0" height="21.0" fill="#5e5e5e"/>
<rect x="62.7" y="745.7" width="6.6" height="2.6" fill="#cdcdcd"/>
<rect x="62.7" y="762.7" width="6.6" height="2.6" fill="#cdcdcd"/>
<rect x="62.0" y="748.3" width="8.0" height="14.5" fill="#b6a171"/>
<rect x="61.0" y="807.0" width="10.0" height="23.0" fill="#5e5e5e"/>
<rect x="61.7" y="807.7" width="8.6" height="2.8" fill="#cdcdcd"/>
<rect x="61.7" y="826.5" width="8.6" height="2.8" fill="#cdcdcd"/>
<rect x="61.0" y="810.5" width="10.0" height="16.1" fill="#b6a171"/>
<rect x="101.0" y="590.0" width="7.0" height="14.0" fill="#5e5e5e"/>
<rect x="101.7" y="590.7" width="5.6" height="1.5" fill="#cdcdcd"/>
<rect x="101.7" y="601.8" width="5.6" height="1.5" fill="#cdcdcd"/>
<rect x="101.7" y="592.2" width="5.6" height="9.6" fill="#0a0a0a"/>
<rect x="101.0" y="609.0" width="7.0" height="15.0" fill="#5e5e5e"/>
<rect x="101.7" y="609.7" width="5.6" height="1.6" fill="#cdcdcd"/>
<rect x="101.7" y="621.7" width="5.6" height="1.6" fill="#cdcdcd"/>
<rect x="101.0" y="611.3" width="7.0" height="10.4" fill="#b6a171"/>
<rect x="102.0" y="801.0" width="8.0" height="16.0" fill="#5e5e5e"/>
<rect x="102.7" y="801.7" width="6.6" height="1.6" fill="#cdcdcd"/>
<rect x="102.7" y="814.7" width="6.6" height="1.6" fill="#cdcdcd"/>
<rect x="102.0" y="803.3" width="8.0" height="11.3" fill="#b6a171"/>
<rect x="102.0" y="822.0" width="8.0" height="14.0" fill="#5e5e5e"/>
<rect x="102.7" y="822.7" width="6.6" height="1.5" fill="#cdcdcd"/>
<rect x="102.7" y="833.8" width="6.6" height="1.5" fill="#cdcdcd"/>
<rect x="102.7" y="824.2" width="6.6" height="9.6" fill="#0a0a0a"/>
<rect x="7.0" y="869.0" width="24.0" height="9.0" fill="#5e5e5e"/>
<rect x="7.7" y="869.7" width="2.8" height="7.6" fill="#cdcdcd"/>
<rect x="27.5" y="869.7" width="2.8" height="7.6" fill="#cdcdcd"/>
<rect x="10.5" y="869.0" width="17.0" height="9.0" fill="#b6a171"/>
<rect x="34.0" y="869.0" width="23.0" height="9.0" fill="#5e5e5e"/>
<rect x="34.7" y="869.7" width="2.7" height="7.6" fill="#cdcdcd"/>
<rect x="53.6" y="869.7" width="2.7" height="7.6" fill="#cdcdcd"/>
<rect x="37.4" y="869.7" width="16.2" height="7.6" fill="#0a0a0a"/>
<rect x="61.0" y="869.0" width="23.0" height="9.0" fill="#5e5e5e"/>
<rect x="61.7" y="869.7" width="2.7" height="7.6" fill="#cdcdcd"/>
<rect x="80.6" y="869.7" width="2.7" height="7.6" fill="#cdcdcd"/>
<rect x="64.4" y="869.0" width="16.2" height="9.0" fill="#b6a171"/>
<rect x="93.0" y="876.0" width="15.0" height="8.0" fill="#5e5e5e"/>
<rect x="93.7" y="876.7" width="1.5" height="6.6" fill="#cdcdcd"/>
<rect x="105.8" y="876.7" width="1.5" height="6.6" fill="#cdcdcd"/>
<rect x="95.2" y="876.0" width="10.6" height="8.0" fill="#b6a171"/>
<rect x="101.0" y="887.0" width="8.0" height="16.0" fill="#5e5e5e"/>
<rect x="101.7" y="887.7" width="6.6" height="1.6" fill="#cdcdcd"/>
<rect x="101.7" y="900.7" width="6.6" height="1.6" fill="#cdcdcd"/>
<rect x="101.7" y="889.3" width="6.6" height="11.3" fill="#0a0a0a"/>
<rect x="102.0" y="906.0" width="15.0" height="8.0" fill="#5e5e5e"/>
<rect x="102.7" y="906.7" width="1.5" height="6.6" fill="#cdcdcd"/>
<rect x="114.8" y="906.7" width="1.5" height="6.6" fill="#cdcdcd"/>
<rect x="104.2" y="906.0" width="10.6" height="8.0" fill="#b6a171"/>
<rect x="-4.5" y="886.5" width="69" height="59" fill="none" stroke="#96ba92" stroke-width="1"/>
<rect x="-2" y="890" width="8" height="8" fill="#800000"/>
<rect x="12" y="890" width="8" height="8" fill="#646464"/>
<rect x="26" y="890" width="8" height="8" fill="#646464"/>
<rect x="40" y="890" width="8" height="8" fill="#646464"/>
<rect x="54" y="890" width="8" height="8" fill="#800000"/>
<rect x="-2" y="904" width="8" height="8" fill="#646464"/>
<rect x="12" y="904" width="8" height="8" fill="#646464"/>
<rect x="26" y="904" width="8" height="8" fill="#646464"/>
<rect x="40" y="904" width="8" height="8" fill="#646464"/>
<rect x="54" y="904" width="8" height="8" fill="#646464"/>
<rect x="-2" y="918" width="8" height="8" fill="#646464"/>
<rect x="12" y="918" width="8" height="8" fill="#646464"/>
<rect x="26" y="918" width="8" height="8" fill="#646464"/>
<rect x="40" y="918" width="8" height="8" fill="#646464"/>
<rect x="54" y="918" width="8" height="8" fill="#646464"/>
<rect x="-2" y="932" width="8" height="8" fill="#800000"/>
<rect x="12" y="932" width="8" height="8" fill="#646464"/>
<rect x="26" y="932" width="8" height="8" fill="#646464"/>
<rect x="40" y="932" width="8" height="8" fill="#646464"/>
<rect x="54" y="932" width="8" height="8" fill="#800000"/>
<text x="12.4" y="919" font-size="10" fill="#92b08c" text-anchor="start" textLength="34.6" lengthAdjust="spacingAndGlyphs" >TRIB902</text>
<rect x="70" y="901" width="22" height="8" fill="#a3a394"/>
<circle cx="89.0" cy="905.0" r="1.5" fill="#ffffff"/>
<rect x="84.0" y="914.0" width="9.0" height="22.0" fill="#5e5e5e"/>
<rect x="84.7" y="914.7" width="7.6" height="2.6" fill="#cdcdcd"/>
<rect x="84.7" y="932.7" width="7.6" height="2.6" fill="#cdcdcd"/>
<rect x="84.7" y="917.3" width="7.6" height="15.5" fill="#0a0a0a"/>
<rect x="71.0" y="928.0" width="9.0" height="16.0" fill="#5e5e5e"/>
<rect x="71.7" y="928.7" width="7.6" height="1.7" fill="#cdcdcd"/>
<rect x="71.7" y="941.6" width="7.6" height="1.7" fill="#cdcdcd"/>
<rect x="71.0" y="930.4" width="9.0" height="11.3" fill="#b6a171"/>
<rect x="112.5" y="474.5" width="182" height="226" fill="none" stroke="#96ba92" stroke-width="1"/>
<path d="M117,479h5v5h-5zM119,478h1v7h-1zM116,481h7v1h-7z" fill="#646464"/>
<path d="M128,479h5v5h-5zM130,478h1v7h-1zM127,481h7v1h-7z" fill="#646464"/>
<path d="M139,479h5v5h-5zM141,478h1v7h-1zM138,481h7v1h-7z" fill="#646464"/>
<path d="M150,479h5v5h-5zM152,478h1v7h-1zM149,481h7v1h-7z" fill="#800000"/>
<path d="M161,479h5v5h-5zM163,478h1v7h-1zM160,481h7v1h-7z" fill="#646464"/>
<path d="M172,479h5v5h-5zM174,478h1v7h-1zM171,481h7v1h-7z" fill="#800000"/>
<path d="M183,479h5v5h-5zM185,478h1v7h-1zM182,481h7v1h-7z" fill="#800000"/>
<path d="M194,479h5v5h-5zM196,478h1v7h-1zM193,481h7v1h-7z" fill="#800000"/>
<path d="M205,479h5v5h-5zM207,478h1v7h-1zM204,481h7v1h-7z" fill="#646464"/>
<path d="M216,479h5v5h-5zM218,478h1v7h-1zM215,481h7v1h-7z" fill="#646464"/>
<path d="M228,479h5v5h-5zM230,478h1v7h-1zM227,481h7v1h-7z" fill="#646464"/>
<path d="M239,479h5v5h-5zM241,478h1v7h-1zM238,481h7v1h-7z" fill="#646464"/>
<path d="M250,479h5v5h-5zM252,478h1v7h-1zM249,481h7v1h-7z" fill="#646464"/>
<path d="M261,479h5v5h-5zM263,478h1v7h-1zM260,481h7v1h-7z" fill="#646464"/>
<path d="M272,479h5v5h-5zM274,478h1v7h-1zM271,481h7v1h-7z" fill="#646464"/>
<path d="M283,479h5v5h-5zM285,478h1v7h-1zM282,481h7v1h-7z" fill="#646464"/>
<path d="M117,490h5v5h-5zM119,489h1v7h-1zM116,492h7v1h-7z" fill="#646464"/>
<path d="M128,490h5v5h-5zM130,489h1v7h-1zM127,492h7v1h-7z" fill="#646464"/>
<path d="M139,490h5v5h-5zM141,489h1v7h-1zM138,492h7v1h-7z" fill="#646464"/>
<path d="M150,490h5v5h-5zM152,489h1v7h-1zM149,492h7v1h-7z" fill="#646464"/>
<path d="M161,490h5v5h-5zM163,489h1v7h-1zM160,492h7v1h-7z" fill="#646464"/>
<path d="M283,490h5v5h-5zM285,489h1v7h-1zM282,492h7v1h-7z" fill="#800000"/>
<path d="M117,501h5v5h-5zM119,500h1v7h-1zM116,503h7v1h-7z" fill="#646464"/>
<path d="M128,501h5v5h-5zM130,500h1v7h-1zM127,503h7v1h-7z" fill="#646464"/>
<path d="M139,501h5v5h-5zM141,500h1v7h-1zM138,503h7v1h-7z" fill="#646464"/>
<path d="M150,501h5v5h-5zM152,500h1v7h-1zM149,503h7v1h-7z" fill="#646464"/>
<path d="M161,501h5v5h-5zM163,500h1v7h-1zM160,503h7v1h-7z" fill="#646464"/>
<path d="M283,501h5v5h-5zM285,500h1v7h-1zM282,503h7v1h-7z" fill="#646464"/>
<path d="M117,512h5v5h-5zM119,511h1v7h-1zM116,514h7v1h-7z" fill="#646464"/>
<path d="M128,512h5v5h-5zM130,511h1v7h-1zM127,514h7v1h-7z" fill="#646464"/>
<path d="M139,512h5v5h-5zM141,511h1v7h-1zM138,514h7v1h-7z" fill="#646464"/>
<path d="M150,512h5v5h-5zM152,511h1v7h-1zM149,514h7v1h-7z" fill="#646464"/>
<path d="M161,512h5v5h-5zM163,511h1v7h-1zM160,514h7v1h-7z" fill="#646464"/>
<path d="M283,512h5v5h-5zM285,511h1v7h-1zM282,514h7v1h-7z" fill="#800000"/>
<path d="M117,523h5v5h-5zM119,522h1v7h-1zM116,525h7v1h-7z" fill="#646464"/>
<path d="M128,523h5v5h-5zM130,522h1v7h-1zM127,525h7v1h-7z" fill="#646464"/>
<path d="M139,523h5v5h-5zM141,522h1v7h-1zM138,525h7v1h-7z" fill="#646464"/>
<path d="M150,523h5v5h-5zM152,522h1v7h-1zM149,525h7v1h-7z" fill="#646464"/>
<path d="M161,523h5v5h-5zM163,522h1v7h-1zM160,525h7v1h-7z" fill="#646464"/>
<path d="M172,523h5v5h-5zM174,522h1v7h-1zM171,525h7v1h-7z" fill="#646464"/>
<path d="M283,523h5v5h-5zM285,522h1v7h-1zM282,525h7v1h-7z" fill="#646464"/>
<path d="M117,534h5v5h-5zM119,533h1v7h-1zM116,536h7v1h-7z" fill="#646464"/>
<path d="M128,534h5v5h-5zM130,533h1v7h-1zM127,536h7v1h-7z" fill="#646464"/>
<path d="M139,534h5v5h-5zM141,533h1v7h-1zM138,536h7v1h-7z" fill="#646464"/>
<path d="M150,534h5v5h-5zM152,533h1v7h-1zM149,536h7v1h-7z" fill="#646464"/>
<path d="M161,534h5v5h-5zM163,533h1v7h-1zM160,536h7v1h-7z" fill="#646464"/>
<path d="M172,534h5v5h-5zM174,533h1v7h-1zM171,536h7v1h-7z" fill="#646464"/>
<path d="M283,534h5v5h-5zM285,533h1v7h-1zM282,536h7v1h-7z" fill="#800000"/>
<path d="M117,545h5v5h-5zM119,544h1v7h-1zM116,547h7v1h-7z" fill="#646464"/>
<path d="M128,545h5v5h-5zM130,544h1v7h-1zM127,547h7v1h-7z" fill="#646464"/>
<path d="M139,545h5v5h-5zM141,544h1v7h-1zM138,547h7v1h-7z" fill="#646464"/>
<path d="M150,545h5v5h-5zM152,544h1v7h-1zM149,547h7v1h-7z" fill="#646464"/>
<path d="M161,545h5v5h-5zM163,544h1v7h-1zM160,547h7v1h-7z" fill="#646464"/>
<path d="M172,545h5v5h-5zM174,544h1v7h-1zM171,547h7v1h-7z" fill="#646464"/>
<path d="M283,545h5v5h-5zM285,544h1v7h-1zM282,547h7v1h-7z" fill="#646464"/>
<path d="M117,556h5v5h-5zM119,555h1v7h-1zM116,558h7v1h-7z" fill="#646464"/>
<path d="M128,556h5v5h-5zM130,555h1v7h-1zM127,558h7v1h-7z" fill="#646464"/>
<path d="M139,556h5v5h-5zM141,555h1v7h-1zM138,558h7v1h-7z" fill="#646464"/>
<path d="M150,556h5v5h-5zM152,555h1v7h-1zM149,558h7v1h-7z" fill="#646464"/>
<path d="M161,556h5v5h-5zM163,555h1v7h-1zM160,558h7v1h-7z" fill="#646464"/>
<path d="M172,556h5v5h-5zM174,555h1v7h-1zM171,558h7v1h-7z" fill="#646464"/>
<path d="M183,556h5v5h-5zM185,555h1v7h-1zM182,558h7v1h-7z" fill="#646464"/>
<path d="M194,556h5v5h-5zM196,555h1v7h-1zM193,558h7v1h-7z" fill="#646464"/>
<path d="M205,556h5v5h-5zM207,555h1v7h-1zM204,558h7v1h-7z" fill="#646464"/>
<path d="M216,556h5v5h-5zM218,555h1v7h-1zM215,558h7v1h-7z" fill="#646464"/>
<path d="M228,556h5v5h-5zM230,555h1v7h-1zM227,558h7v1h-7z" fill="#646464"/>
<path d="M239,556h5v5h-5zM241,555h1v7h-1zM238,558h7v1h-7z" fill="#646464"/>
<path d="M250,556h5v5h-5zM252,555h1v7h-1zM249,558h7v1h-7z" fill="#646464"/>
<path d="M261,556h5v5h-5zM263,555h1v7h-1zM260,558h7v1h-7z" fill="#646464"/>
<path d="M272,556h5v5h-5zM274,555h1v7h-1zM271,558h7v1h-7z" fill="#646464"/>
<path d="M283,556h5v5h-5zM285,555h1v7h-1zM282,558h7v1h-7z" fill="#800000"/>
<path d="M117,567h5v5h-5zM119,566h1v7h-1zM116,569h7v1h-7z" fill="#646464"/>
<path d="M128,567h5v5h-5zM130,566h1v7h-1zM127,569h7v1h-7z" fill="#646464"/>
<path d="M139,567h5v5h-5zM141,566h1v7h-1zM138,569h7v1h-7z" fill="#646464"/>
<path d="M150,567h5v5h-5zM152,566h1v7h-1zM149,569h7v1h-7z" fill="#646464"/>
<path d="M161,567h5v5h-5zM163,566h1v7h-1zM160,569h7v1h-7z" fill="#646464"/>
<path d="M172,567h5v5h-5zM174,566h1v7h-1zM171,569h7v1h-7z" fill="#646464"/>
<path d="M183,567h5v5h-5zM185,566h1v7h-1zM182,569h7v1h-7z" fill="#646464"/>
<path d="M194,567h5v5h-5zM196,566h1v7h-1zM193,569h7v1h-7z" fill="#646464"/>
<path d="M205,567h5v5h-5zM207,566h1v7h-1zM204,569h7v1h-7z" fill="#646464"/>
<path d="M216,567h5v5h-5zM218,566h1v7h-1zM215,569h7v1h-7z" fill="#646464"/>
<path d="M228,567h5v5h-5zM230,566h1v7h-1zM227,569h7v1h-7z" fill="#646464"/>
<path d="M239,567h5v5h-5zM241,566h1v7h-1zM238,569h7v1h-7z" fill="#646464"/>
<path d="M250,567h5v5h-5zM252,566h1v7h-1zM249,569h7v1h-7z" fill="#646464"/>
<path d="M261,567h5v5h-5zM263,566h1v7h-1zM260,569h7v1h-7z" fill="#646464"/>
<path d="M272,567h5v5h-5zM274,566h1v7h-1zM271,569h7v1h-7z" fill="#646464"/>
<path d="M283,567h5v5h-5zM285,566h1v7h-1zM282,569h7v1h-7z" fill="#646464"/>
<path d="M117,578h5v5h-5zM119,577h1v7h-1zM116,580h7v1h-7z" fill="#646464"/>
<path d="M128,578h5v5h-5zM130,577h1v7h-1zM127,580h7v1h-7z" fill="#646464"/>
<path d="M139,578h5v5h-5zM141,577h1v7h-1zM138,580h7v1h-7z" fill="#646464"/>
<path d="M150,578h5v5h-5zM152,577h1v7h-1zM149,580h7v1h-7z" fill="#646464"/>
<path d="M161,578h5v5h-5zM163,577h1v7h-1zM160,580h7v1h-7z" fill="#646464"/>
<path d="M172,578h5v5h-5zM174,577h1v7h-1zM171,580h7v1h-7z" fill="#646464"/>
<path d="M183,578h5v5h-5zM185,577h1v7h-1zM182,580h7v1h-7z" fill="#646464"/>
<path d="M194,578h5v5h-5zM196,577h1v7h-1zM193,580h7v1h-7z" fill="#646464"/>
<path d="M205,578h5v5h-5zM207,577h1v7h-1zM204,580h7v1h-7z" fill="#646464"/>
<path d="M216,578h5v5h-5zM218,577h1v7h-1zM215,580h7v1h-7z" fill="#646464"/>
<path d="M228,578h5v5h-5zM230,577h1v7h-1zM227,580h7v1h-7z" fill="#646464"/>
<path d="M239,578h5v5h-5zM241,577h1v7h-1zM238,580h7v1h-7z" fill="#646464"/>
<path d="M250,578h5v5h-5zM252,577h1v7h-1zM249,580h7v1h-7z" fill="#646464"/>
<path d="M261,578h5v5h-5zM263,577h1v7h-1zM260,580h7v1h-7z" fill="#646464"/>
<path d="M272,578h5v5h-5zM274,577h1v7h-1zM271,580h7v1h-7z" fill="#646464"/>
<path d="M283,578h5v5h-5zM285,577h1v7h-1zM282,580h7v1h-7z" fill="#646464"/>
<path d="M117,589h5v5h-5zM119,588h1v7h-1zM116,591h7v1h-7z" fill="#646464"/>
<path d="M128,589h5v5h-5zM130,588h1v7h-1zM127,591h7v1h-7z" fill="#800000"/>
<path d="M139,589h5v5h-5zM141,588h1v7h-1zM138,591h7v1h-7z" fill="#646464"/>
<path d="M150,589h5v5h-5zM152,588h1v7h-1zM149,591h7v1h-7z" fill="#646464"/>
<path d="M161,589h5v5h-5zM163,588h1v7h-1zM160,591h7v1h-7z" fill="#646464"/>
<path d="M172,589h5v5h-5zM174,588h1v7h-1zM171,591h7v1h-7z" fill="#646464"/>
<path d="M183,589h5v5h-5zM185,588h1v7h-1zM182,591h7v1h-7z" fill="#646464"/>
<path d="M194,589h5v5h-5zM196,588h1v7h-1zM193,591h7v1h-7z" fill="#646464"/>
<path d="M205,589h5v5h-5zM207,588h1v7h-1zM204,591h7v1h-7z" fill="#646464"/>
<path d="M216,589h5v5h-5zM218,588h1v7h-1zM215,591h7v1h-7z" fill="#646464"/>
<path d="M228,589h5v5h-5zM230,588h1v7h-1zM227,591h7v1h-7z" fill="#646464"/>
<path d="M239,589h5v5h-5zM241,588h1v7h-1zM238,591h7v1h-7z" fill="#646464"/>
<path d="M250,589h5v5h-5zM252,588h1v7h-1zM249,591h7v1h-7z" fill="#646464"/>
<path d="M261,589h5v5h-5zM263,588h1v7h-1zM260,591h7v1h-7z" fill="#646464"/>
<path d="M272,589h5v5h-5zM274,588h1v7h-1zM271,591h7v1h-7z" fill="#646464"/>
<path d="M283,589h5v5h-5zM285,588h1v7h-1zM282,591h7v1h-7z" fill="#646464"/>
<path d="M117,600h5v5h-5zM119,599h1v7h-1zM116,602h7v1h-7z" fill="#646464"/>
<path d="M128,600h5v5h-5zM130,599h1v7h-1zM127,602h7v1h-7z" fill="#646464"/>
<path d="M183,600h5v5h-5zM185,599h1v7h-1zM182,602h7v1h-7z" fill="#646464"/>
<path d="M194,600h5v5h-5zM196,599h1v7h-1zM193,602h7v1h-7z" fill="#646464"/>
<path d="M205,600h5v5h-5zM207,599h1v7h-1zM204,602h7v1h-7z" fill="#646464"/>
<path d="M216,600h5v5h-5zM218,599h1v7h-1zM215,602h7v1h-7z" fill="#646464"/>
<path d="M228,600h5v5h-5zM230,599h1v7h-1zM227,602h7v1h-7z" fill="#646464"/>
<path d="M239,600h5v5h-5zM241,599h1v7h-1zM238,602h7v1h-7z" fill="#646464"/>
<path d="M250,600h5v5h-5zM252,599h1v7h-1zM249,602h7v1h-7z" fill="#646464"/>
<path d="M261,600h5v5h-5zM263,599h1v7h-1zM260,602h7v1h-7z" fill="#646464"/>
<path d="M272,600h5v5h-5zM274,599h1v7h-1zM271,602h7v1h-7z" fill="#646464"/>
<path d="M283,600h5v5h-5zM285,599h1v7h-1zM282,602h7v1h-7z" fill="#646464"/>
<path d="M117,611h5v5h-5zM119,610h1v7h-1zM116,613h7v1h-7z" fill="#646464"/>
<path d="M128,611h5v5h-5zM130,610h1v7h-1zM127,613h7v1h-7z" fill="#800000"/>
<path d="M183,611h5v5h-5zM185,610h1v7h-1zM182,613h7v1h-7z" fill="#646464"/>
<path d="M194,611h5v5h-5zM196,610h1v7h-1zM193,613h7v1h-7z" fill="#646464"/>
<path d="M205,611h5v5h-5zM207,610h1v7h-1zM204,613h7v1h-7z" fill="#646464"/>
<path d="M261,611h5v5h-5zM263,610h1v7h-1zM260,613h7v1h-7z" fill="#646464"/>
<path d="M272,611h5v5h-5zM274,610h1v7h-1zM271,613h7v1h-7z" fill="#800000"/>
<path d="M283,611h5v5h-5zM285,610h1v7h-1zM282,613h7v1h-7z" fill="#646464"/>
<path d="M117,622h5v5h-5zM119,621h1v7h-1zM116,624h7v1h-7z" fill="#646464"/>
<path d="M128,622h5v5h-5zM130,621h1v7h-1zM127,624h7v1h-7z" fill="#646464"/>
<path d="M183,622h5v5h-5zM185,621h1v7h-1zM182,624h7v1h-7z" fill="#646464"/>
<path d="M194,622h5v5h-5zM196,621h1v7h-1zM193,624h7v1h-7z" fill="#646464"/>
<path d="M205,622h5v5h-5zM207,621h1v7h-1zM204,624h7v1h-7z" fill="#646464"/>
<path d="M261,622h5v5h-5zM263,621h1v7h-1zM260,624h7v1h-7z" fill="#800000"/>
<path d="M272,622h5v5h-5zM274,621h1v7h-1zM271,624h7v1h-7z" fill="#800000"/>
<path d="M283,622h5v5h-5zM285,621h1v7h-1zM282,624h7v1h-7z" fill="#646464"/>
<path d="M117,633h5v5h-5zM119,632h1v7h-1zM116,635h7v1h-7z" fill="#646464"/>
<path d="M128,633h5v5h-5zM130,632h1v7h-1zM127,635h7v1h-7z" fill="#800000"/>
<path d="M183,633h5v5h-5zM185,632h1v7h-1zM182,635h7v1h-7z" fill="#646464"/>
<path d="M194,633h5v5h-5zM196,632h1v7h-1zM193,635h7v1h-7z" fill="#646464"/>
<path d="M205,633h5v5h-5zM207,632h1v7h-1zM204,635h7v1h-7z" fill="#646464"/>
<path d="M261,633h5v5h-5zM263,632h1v7h-1zM260,635h7v1h-7z" fill="#646464"/>
<path d="M272,633h5v5h-5zM274,632h1v7h-1zM271,635h7v1h-7z" fill="#800000"/>
<path d="M283,633h5v5h-5zM285,632h1v7h-1zM282,635h7v1h-7z" fill="#646464"/>
<path d="M117,644h5v5h-5zM119,643h1v7h-1zM116,646h7v1h-7z" fill="#646464"/>
<path d="M128,644h5v5h-5zM130,643h1v7h-1zM127,646h7v1h-7z" fill="#646464"/>
<path d="M183,644h5v5h-5zM185,643h1v7h-1zM182,646h7v1h-7z" fill="#646464"/>
<path d="M194,644h5v5h-5zM196,643h1v7h-1zM193,646h7v1h-7z" fill="#646464"/>
<path d="M205,644h5v5h-5zM207,643h1v7h-1zM204,646h7v1h-7z" fill="#646464"/>
<path d="M261,644h5v5h-5zM263,643h1v7h-1zM260,646h7v1h-7z" fill="#646464"/>
<path d="M272,644h5v5h-5zM274,643h1v7h-1zM271,646h7v1h-7z" fill="#646464"/>
<path d="M283,644h5v5h-5zM285,643h1v7h-1zM282,646h7v1h-7z" fill="#646464"/>
<path d="M117,655h5v5h-5zM119,654h1v7h-1zM116,657h7v1h-7z" fill="#646464"/>
<path d="M128,655h5v5h-5zM130,654h1v7h-1zM127,657h7v1h-7z" fill="#800000"/>
<path d="M183,655h5v5h-5zM185,654h1v7h-1zM182,657h7v1h-7z" fill="#646464"/>
<path d="M194,655h5v5h-5zM196,654h1v7h-1zM193,657h7v1h-7z" fill="#646464"/>
<path d="M205,655h5v5h-5zM207,654h1v7h-1zM204,657h7v1h-7z" fill="#646464"/>
<path d="M272,655h5v5h-5zM274,654h1v7h-1zM271,657h7v1h-7z" fill="#800000"/>
<path d="M283,655h5v5h-5zM285,654h1v7h-1zM282,657h7v1h-7z" fill="#646464"/>
<path d="M117,666h5v5h-5zM119,665h1v7h-1zM116,668h7v1h-7z" fill="#646464"/>
<path d="M128,666h5v5h-5zM130,665h1v7h-1zM127,668h7v1h-7z" fill="#646464"/>
<path d="M183,666h5v5h-5zM185,665h1v7h-1zM182,668h7v1h-7z" fill="#646464"/>
<path d="M194,666h5v5h-5zM196,665h1v7h-1zM193,668h7v1h-7z" fill="#646464"/>
<path d="M205,666h5v5h-5zM207,665h1v7h-1zM204,668h7v1h-7z" fill="#646464"/>
<path d="M239,666h5v5h-5zM241,665h1v7h-1zM238,668h7v1h-7z" fill="#800000"/>
<path d="M250,666h5v5h-5zM252,665h1v7h-1zM249,668h7v1h-7z" fill="#800000"/>
<path d="M272,666h5v5h-5zM274,665h1v7h-1zM271,668h7v1h-7z" fill="#800000"/>
<path d="M283,666h5v5h-5zM285,665h1v7h-1zM282,668h7v1h-7z" fill="#646464"/>
<path d="M117,677h5v5h-5zM119,676h1v7h-1zM116,679h7v1h-7z" fill="#646464"/>
<path d="M128,677h5v5h-5zM130,676h1v7h-1zM127,679h7v1h-7z" fill="#800000"/>
<path d="M139,677h5v5h-5zM141,676h1v7h-1zM138,679h7v1h-7z" fill="#646464"/>
<path d="M150,677h5v5h-5zM152,676h1v7h-1zM149,679h7v1h-7z" fill="#800000"/>
<path d="M161,677h5v5h-5zM163,676h1v7h-1zM160,679h7v1h-7z" fill="#646464"/>
<path d="M172,677h5v5h-5zM174,676h1v7h-1zM171,679h7v1h-7z" fill="#800000"/>
<path d="M183,677h5v5h-5zM185,676h1v7h-1zM182,679h7v1h-7z" fill="#646464"/>
<path d="M194,677h5v5h-5zM196,676h1v7h-1zM193,679h7v1h-7z" fill="#646464"/>
<path d="M205,677h5v5h-5zM207,676h1v7h-1zM204,679h7v1h-7z" fill="#646464"/>
<path d="M239,677h5v5h-5zM241,676h1v7h-1zM238,679h7v1h-7z" fill="#800000"/>
<path d="M250,677h5v5h-5zM252,676h1v7h-1zM249,679h7v1h-7z" fill="#800000"/>
<path d="M261,677h5v5h-5zM263,676h1v7h-1zM260,679h7v1h-7z" fill="#646464"/>
<path d="M272,677h5v5h-5zM274,676h1v7h-1zM271,679h7v1h-7z" fill="#646464"/>
<path d="M283,677h5v5h-5zM285,676h1v7h-1zM282,679h7v1h-7z" fill="#646464"/>
<path d="M117,688h5v5h-5zM119,687h1v7h-1zM116,690h7v1h-7z" fill="#646464"/>
<path d="M128,688h5v5h-5zM130,687h1v7h-1zM127,690h7v1h-7z" fill="#646464"/>
<path d="M139,688h5v5h-5zM141,687h1v7h-1zM138,690h7v1h-7z" fill="#646464"/>
<path d="M150,688h5v5h-5zM152,687h1v7h-1zM149,690h7v1h-7z" fill="#646464"/>
<path d="M161,688h5v5h-5zM163,687h1v7h-1zM160,690h7v1h-7z" fill="#646464"/>
<path d="M172,688h5v5h-5zM174,687h1v7h-1zM171,690h7v1h-7z" fill="#646464"/>
<path d="M183,688h5v5h-5zM185,687h1v7h-1zM182,690h7v1h-7z" fill="#646464"/>
<path d="M194,688h5v5h-5zM196,687h1v7h-1zM193,690h7v1h-7z" fill="#646464"/>
<path d="M205,688h5v5h-5zM207,687h1v7h-1zM204,690h7v1h-7z" fill="#646464"/>
<path d="M216,688h5v5h-5zM218,687h1v7h-1zM215,690h7v1h-7z" fill="#646464"/>
<path d="M228,688h5v5h-5zM230,687h1v7h-1zM227,690h7v1h-7z" fill="#646464"/>
<path d="M239,688h5v5h-5zM241,687h1v7h-1zM238,690h7v1h-7z" fill="#646464"/>
<path d="M250,688h5v5h-5zM252,687h1v7h-1zM249,690h7v1h-7z" fill="#646464"/>
<path d="M261,688h5v5h-5zM263,687h1v7h-1zM260,690h7v1h-7z" fill="#646464"/>
<path d="M272,688h5v5h-5zM274,687h1v7h-1zM271,690h7v1h-7z" fill="#646464"/>
<path d="M283,688h5v5h-5zM285,687h1v7h-1zM282,690h7v1h-7z" fill="#646464"/>
<text x="216.5" y="651.6" font-size="35" fill="#92b08c" text-anchor="start" textLength="132" lengthAdjust="spacingAndGlyphs" transform="rotate(-90 216.5 651.6)" >PA_HB_K</text>
<rect x="144.0" y="463.0" width="16.0" height="7.0" fill="#5e5e5e"/>
<rect x="144.7" y="463.7" width="1.6" height="5.6" fill="#cdcdcd"/>
<rect x="157.8" y="463.7" width="1.6" height="5.6" fill="#cdcdcd"/>
<rect x="146.2" y="463.0" width="11.5" height="7.0" fill="#b6a171"/>
<rect x="164.0" y="463.0" width="15.0" height="7.0" fill="#5e5e5e"/>
<rect x="164.7" y="463.7" width="1.6" height="5.6" fill="#cdcdcd"/>
<rect x="176.8" y="463.7" width="1.6" height="5.6" fill="#cdcdcd"/>
<rect x="166.2" y="463.0" width="10.5" height="7.0" fill="#b6a171"/>
<rect x="183.0" y="463.0" width="15.0" height="7.0" fill="#5e5e5e"/>
<rect x="183.7" y="463.7" width="1.6" height="5.6" fill="#cdcdcd"/>
<rect x="195.8" y="463.7" width="1.6" height="5.6" fill="#cdcdcd"/>
<rect x="185.2" y="463.0" width="10.5" height="7.0" fill="#b6a171"/>
<rect x="203.0" y="463.0" width="15.0" height="7.0" fill="#5e5e5e"/>
<rect x="203.7" y="463.7" width="1.6" height="5.6" fill="#cdcdcd"/>
<rect x="215.8" y="463.7" width="1.6" height="5.6" fill="#cdcdcd"/>
<rect x="205.2" y="463.0" width="10.5" height="7.0" fill="#b6a171"/>
<rect x="145.0" y="463.0" width="14.0" height="7.0" fill="#5e5e5e"/>
<rect x="145.7" y="463.7" width="1.5" height="5.6" fill="#cdcdcd"/>
<rect x="156.8" y="463.7" width="1.5" height="5.6" fill="#cdcdcd"/>
<rect x="147.2" y="463.0" width="9.6" height="7.0" fill="#b6a171"/>
<rect x="119.0" y="704.0" width="15.0" height="7.0" fill="#5e5e5e"/>
<rect x="119.7" y="704.7" width="1.5" height="5.6" fill="#cdcdcd"/>
<rect x="131.8" y="704.7" width="1.6" height="5.6" fill="#cdcdcd"/>
<rect x="121.2" y="704.0" width="10.5" height="7.0" fill="#b6a171"/>
<rect x="119.0" y="733.0" width="15.0" height="7.0" fill="#5e5e5e"/>
<rect x="119.7" y="733.7" width="1.5" height="5.6" fill="#cdcdcd"/>
<rect x="131.8" y="733.7" width="1.6" height="5.6" fill="#cdcdcd"/>
<rect x="121.2" y="733.0" width="10.5" height="7.0" fill="#b6a171"/>
<rect x="150.0" y="704.0" width="15.0" height="7.0" fill="#5e5e5e"/>
<rect x="150.7" y="704.7" width="1.6" height="5.6" fill="#cdcdcd"/>
<rect x="162.8" y="704.7" width="1.6" height="5.6" fill="#cdcdcd"/>
<rect x="152.2" y="704.0" width="10.5" height="7.0" fill="#b6a171"/>
<rect x="150.0" y="733.0" width="15.0" height="7.0" fill="#5e5e5e"/>
<rect x="150.7" y="733.7" width="1.6" height="5.6" fill="#cdcdcd"/>
<rect x="162.8" y="733.7" width="1.6" height="5.6" fill="#cdcdcd"/>
<rect x="152.2" y="733.0" width="10.5" height="7.0" fill="#b6a171"/>
<rect x="171.0" y="704.0" width="15.0" height="7.0" fill="#5e5e5e"/>
<rect x="171.7" y="704.7" width="1.6" height="5.6" fill="#cdcdcd"/>
<rect x="183.8" y="704.7" width="1.6" height="5.6" fill="#cdcdcd"/>
<rect x="173.2" y="704.0" width="10.5" height="7.0" fill="#b6a171"/>
<rect x="171.0" y="733.0" width="15.0" height="7.0" fill="#5e5e5e"/>
<rect x="171.7" y="733.7" width="1.6" height="5.6" fill="#cdcdcd"/>
<rect x="183.8" y="733.7" width="1.6" height="5.6" fill="#cdcdcd"/>
<rect x="173.2" y="733.0" width="10.5" height="7.0" fill="#b6a171"/>
<rect x="127.0" y="715.0" width="7.0" height="14.0" fill="#5e5e5e"/>
<rect x="127.7" y="715.7" width="5.6" height="1.5" fill="#cdcdcd"/>
<rect x="127.7" y="726.8" width="5.6" height="1.5" fill="#cdcdcd"/>
<rect x="127.7" y="717.2" width="5.6" height="9.6" fill="#0a0a0a"/>
<rect x="150.0" y="715.0" width="7.0" height="14.0" fill="#5e5e5e"/>
<rect x="150.7" y="715.7" width="5.6" height="1.5" fill="#cdcdcd"/>
<rect x="150.7" y="726.8" width="5.6" height="1.5" fill="#cdcdcd"/>
<rect x="150.7" y="717.2" width="5.6" height="9.6" fill="#0a0a0a"/>
<rect x="178.0" y="715.0" width="8.0" height="14.0" fill="#5e5e5e"/>
<rect x="178.7" y="715.7" width="6.6" height="1.5" fill="#cdcdcd"/>
<rect x="178.7" y="726.8" width="6.6" height="1.5" fill="#cdcdcd"/>
<rect x="178.7" y="717.2" width="6.6" height="9.6" fill="#0a0a0a"/>
<rect x="152.0" y="744.0" width="8.0" height="15.0" fill="#5e5e5e"/>
<rect x="152.7" y="744.7" width="6.6" height="1.5" fill="#cdcdcd"/>
<rect x="152.7" y="756.8" width="6.6" height="1.5" fill="#cdcdcd"/>
<rect x="152.0" y="746.2" width="8.0" height="10.5" fill="#b6a171"/>
<rect x="175.0" y="744.0" width="8.0" height="15.0" fill="#5e5e5e"/>
<rect x="175.7" y="744.7" width="6.6" height="1.5" fill="#cdcdcd"/>
<rect x="175.7" y="756.8" width="6.6" height="1.5" fill="#cdcdcd"/>
<rect x="175.0" y="746.2" width="8.0" height="10.5" fill="#b6a171"/>
<rect x="186.0" y="744.0" width="8.0" height="15.0" fill="#5e5e5e"/>
<rect x="186.7" y="744.7" width="6.6" height="1.5" fill="#cdcdcd"/>
<rect x="186.7" y="756.8" width="6.6" height="1.5" fill="#cdcdcd"/>
<rect x="186.0" y="746.2" width="8.0" height="10.5" fill="#b6a171"/>
<rect x="198.0" y="744.0" width="8.0" height="15.0" fill="#5e5e5e"/>
<rect x="198.7" y="744.7" width="6.6" height="1.5" fill="#cdcdcd"/>
<rect x="198.7" y="756.8" width="6.6" height="1.5" fill="#cdcdcd"/>
<rect x="198.0" y="746.2" width="8.0" height="10.5" fill="#b6a171"/>
<rect x="209.0" y="744.0" width="8.0" height="15.0" fill="#5e5e5e"/>
<rect x="209.7" y="744.7" width="6.6" height="1.5" fill="#cdcdcd"/>
<rect x="209.7" y="756.8" width="6.6" height="1.5" fill="#cdcdcd"/>
<rect x="209.0" y="746.2" width="8.0" height="10.5" fill="#b6a171"/>
<rect x="221.0" y="744.0" width="8.0" height="15.0" fill="#5e5e5e"/>
<rect x="221.7" y="744.7" width="6.6" height="1.5" fill="#cdcdcd"/>
<rect x="221.7" y="756.8" width="6.6" height="1.5" fill="#cdcdcd"/>
<rect x="221.0" y="746.2" width="8.0" height="10.5" fill="#b6a171"/>
<rect x="232.0" y="744.0" width="8.0" height="15.0" fill="#5e5e5e"/>
<rect x="232.7" y="744.7" width="6.6" height="1.5" fill="#cdcdcd"/>
<rect x="232.7" y="756.8" width="6.6" height="1.5" fill="#cdcdcd"/>
<rect x="232.0" y="746.2" width="8.0" height="10.5" fill="#b6a171"/>
<rect x="244.0" y="744.0" width="8.0" height="15.0" fill="#5e5e5e"/>
<rect x="244.7" y="744.7" width="6.6" height="1.5" fill="#cdcdcd"/>
<rect x="244.7" y="756.8" width="6.6" height="1.5" fill="#cdcdcd"/>
<rect x="244.0" y="746.2" width="8.0" height="10.5" fill="#b6a171"/>
<rect x="255.0" y="744.0" width="8.0" height="15.0" fill="#5e5e5e"/>
<rect x="255.7" y="744.7" width="6.6" height="1.5" fill="#cdcdcd"/>
<rect x="255.7" y="756.8" width="6.6" height="1.5" fill="#cdcdcd"/>
<rect x="255.0" y="746.2" width="8.0" height="10.5" fill="#b6a171"/>
<rect x="268.0" y="748.0" width="22.0" height="9.0" fill="#5e5e5e"/>
<rect x="268.7" y="748.7" width="2.6" height="7.6" fill="#cdcdcd"/>
<rect x="286.7" y="748.7" width="2.6" height="7.6" fill="#cdcdcd"/>
<rect x="271.3" y="748.0" width="15.4" height="9.0" fill="#b6a171"/>
<rect x="224.0" y="706.0" width="8.0" height="14.0" fill="#5e5e5e"/>
<rect x="224.7" y="706.7" width="6.6" height="1.5" fill="#cdcdcd"/>
<rect x="224.7" y="717.8" width="6.6" height="1.5" fill="#cdcdcd"/>
<rect x="224.0" y="708.2" width="8.0" height="9.6" fill="#b6a171"/>
<rect x="236.0" y="706.0" width="8.0" height="22.0" fill="#5e5e5e"/>
<rect x="236.7" y="706.7" width="6.6" height="2.6" fill="#cdcdcd"/>
<rect x="236.7" y="724.7" width="6.6" height="2.6" fill="#cdcdcd"/>
<rect x="236.0" y="709.3" width="8.0" height="15.4" fill="#b6a171"/>
<rect x="249.0" y="706.0" width="8.0" height="14.0" fill="#5e5e5e"/>
<rect x="249.7" y="706.7" width="6.6" height="1.5" fill="#cdcdcd"/>
<rect x="249.7" y="717.8" width="6.6" height="1.5" fill="#cdcdcd"/>
<rect x="249.0" y="708.2" width="8.0" height="9.6" fill="#b6a171"/>
<rect x="260.0" y="706.0" width="8.0" height="14.0" fill="#5e5e5e"/>
<rect x="260.7" y="706.7" width="6.6" height="1.5" fill="#cdcdcd"/>
<rect x="260.7" y="717.8" width="6.6" height="1.5" fill="#cdcdcd"/>
<rect x="260.0" y="708.2" width="8.0" height="9.6" fill="#b6a171"/>
<rect x="277.0" y="704.0" width="15.0" height="8.0" fill="#5e5e5e"/>
<rect x="277.7" y="704.7" width="1.5" height="6.6" fill="#cdcdcd"/>
<rect x="289.8" y="704.7" width="1.5" height="6.6" fill="#cdcdcd"/>
<rect x="279.2" y="704.0" width="10.6" height="8.0" fill="#b6a171"/>
<rect x="274.0" y="717.0" width="10.0" height="22.0" fill="#5e5e5e"/>
<rect x="274.7" y="717.7" width="8.6" height="2.6" fill="#cdcdcd"/>
<rect x="274.7" y="735.7" width="8.6" height="2.6" fill="#cdcdcd"/>
<rect x="274.7" y="720.3" width="8.6" height="15.4" fill="#0a0a0a"/>
<rect x="288.0" y="715.0" width="7.0" height="16.0" fill="#5e5e5e"/>
<rect x="288.7" y="715.7" width="5.6" height="1.6" fill="#cdcdcd"/>
<rect x="288.7" y="728.7" width="5.6" height="1.6" fill="#cdcdcd"/>
<rect x="288.0" y="717.3" width="7.0" height="11.4" fill="#b6a171"/>
<rect x="299.0" y="734.0" width="8.0" height="16.0" fill="#5e5e5e"/>
<rect x="299.7" y="734.7" width="6.6" height="1.7" fill="#cdcdcd"/>
<rect x="299.7" y="747.6" width="6.6" height="1.7" fill="#cdcdcd"/>
<rect x="299.0" y="736.4" width="8.0" height="11.2" fill="#b6a171"/>
<rect x="299.0" y="754.0" width="8.0" height="14.0" fill="#5e5e5e"/>
<rect x="299.7" y="754.7" width="6.6" height="1.5" fill="#cdcdcd"/>
<rect x="299.7" y="765.8" width="6.6" height="1.5" fill="#cdcdcd"/>
<rect x="299.7" y="756.2" width="6.6" height="9.6" fill="#0a0a0a"/>
<rect x="299.0" y="781.0" width="8.0" height="14.0" fill="#5e5e5e"/>
<rect x="299.7" y="781.7" width="6.6" height="1.5" fill="#cdcdcd"/>
<rect x="299.7" y="792.8" width="6.6" height="1.5" fill="#cdcdcd"/>
<rect x="299.0" y="783.2" width="8.0" height="9.6" fill="#b6a171"/>
<rect x="299.0" y="799.0" width="8.0" height="15.0" fill="#5e5e5e"/>
<rect x="299.7" y="799.7" width="6.6" height="1.5" fill="#cdcdcd"/>
<rect x="299.7" y="811.8" width="6.6" height="1.5" fill="#cdcdcd"/>
<rect x="299.7" y="801.2" width="6.6" height="10.6" fill="#0a0a0a"/>
<rect x="299" y="823" width="8" height="14" fill="#a3a394"/>
<circle cx="302.8" cy="827.0" r="1.2" fill="#ffffff"/>
<rect x="299.0" y="844.0" width="8.0" height="14.0" fill="#5e5e5e"/>
<rect x="299.7" y="844.7" width="6.6" height="1.5" fill="#cdcdcd"/>
<rect x="299.7" y="855.8" width="6.6" height="1.5" fill="#cdcdcd"/>
<rect x="299.0" y="846.2" width="8.0" height="9.6" fill="#b6a171"/>
<rect x="299.0" y="863.0" width="8.0" height="14.0" fill="#5e5e5e"/>
<rect x="299.7" y="863.7" width="6.6" height="1.5" fill="#cdcdcd"/>
<rect x="299.7" y="874.8" width="6.6" height="1.5" fill="#cdcdcd"/>
<rect x="299.7" y="865.2" width="6.6" height="9.6" fill="#0a0a0a"/>
<rect x="112.5" y="762.5" width="178" height="134" fill="none" stroke="#96ba92" stroke-width="1"/>
<path d="M118,768h5v5h-5zM120,767h1v7h-1zM117,770h7v1h-7z" fill="#646464"/>
<path d="M129,768h5v5h-5zM131,767h1v7h-1zM128,770h7v1h-7z" fill="#646464"/>
<path d="M141,768h5v5h-5zM143,767h1v7h-1zM140,770h7v1h-7z" fill="#646464"/>
<path d="M152,768h5v5h-5zM154,767h1v7h-1zM151,770h7v1h-7z" fill="#646464"/>
<path d="M164,768h5v5h-5zM166,767h1v7h-1zM163,770h7v1h-7z" fill="#646464"/>
<path d="M175,768h5v5h-5zM177,767h1v7h-1zM174,770h7v1h-7z" fill="#646464"/>
<path d="M187,768h5v5h-5zM189,767h1v7h-1zM186,770h7v1h-7z" fill="#646464"/>
<path d="M199,768h5v5h-5zM201,767h1v7h-1zM198,770h7v1h-7z" fill="#646464"/>
<path d="M210,768h5v5h-5zM212,767h1v7h-1zM209,770h7v1h-7z" fill="#646464"/>
<path d="M222,768h5v5h-5zM224,767h1v7h-1zM221,770h7v1h-7z" fill="#646464"/>
<path d="M233,768h5v5h-5zM235,767h1v7h-1zM232,770h7v1h-7z" fill="#646464"/>
<path d="M245,768h5v5h-5zM247,767h1v7h-1zM244,770h7v1h-7z" fill="#646464"/>
<path d="M256,768h5v5h-5zM258,767h1v7h-1zM255,770h7v1h-7z" fill="#646464"/>
<path d="M268,768h5v5h-5zM270,767h1v7h-1zM267,770h7v1h-7z" fill="#646464"/>
<path d="M279,768h5v5h-5zM281,767h1v7h-1zM278,770h7v1h-7z" fill="#646464"/>
<path d="M118,779h5v5h-5zM120,778h1v7h-1zM117,781h7v1h-7z" fill="#646464"/>
<path d="M129,779h5v5h-5zM131,778h1v7h-1zM128,781h7v1h-7z" fill="#800000"/>
<path d="M141,779h5v5h-5zM143,778h1v7h-1zM140,781h7v1h-7z" fill="#646464"/>
<path d="M152,779h5v5h-5zM154,778h1v7h-1zM151,781h7v1h-7z" fill="#800000"/>
<path d="M164,779h5v5h-5zM166,778h1v7h-1zM163,781h7v1h-7z" fill="#646464"/>
<path d="M175,779h5v5h-5zM177,778h1v7h-1zM174,781h7v1h-7z" fill="#800000"/>
<path d="M187,779h5v5h-5zM189,778h1v7h-1zM186,781h7v1h-7z" fill="#800000"/>
<path d="M199,779h5v5h-5zM201,778h1v7h-1zM198,781h7v1h-7z" fill="#800000"/>
<path d="M210,779h5v5h-5zM212,778h1v7h-1zM209,781h7v1h-7z" fill="#800000"/>
<path d="M222,779h5v5h-5zM224,778h1v7h-1zM221,781h7v1h-7z" fill="#800000"/>
<path d="M233,779h5v5h-5zM235,778h1v7h-1zM232,781h7v1h-7z" fill="#800000"/>
<path d="M245,779h5v5h-5zM247,778h1v7h-1zM244,781h7v1h-7z" fill="#800000"/>
<path d="M256,779h5v5h-5zM258,778h1v7h-1zM255,781h7v1h-7z" fill="#800000"/>
<path d="M268,779h5v5h-5zM270,778h1v7h-1zM267,781h7v1h-7z" fill="#800000"/>
<path d="M279,779h5v5h-5zM281,778h1v7h-1zM278,781h7v1h-7z" fill="#646464"/>
<path d="M118,791h5v5h-5zM120,790h1v7h-1zM117,793h7v1h-7z" fill="#646464"/>
<path d="M129,791h5v5h-5zM131,790h1v7h-1zM128,793h7v1h-7z" fill="#800000"/>
<path d="M210,791h5v5h-5zM212,790h1v7h-1zM209,793h7v1h-7z" fill="#646464"/>
<path d="M222,791h5v5h-5zM224,790h1v7h-1zM221,793h7v1h-7z" fill="#646464"/>
<path d="M233,791h5v5h-5zM235,790h1v7h-1zM232,793h7v1h-7z" fill="#646464"/>
<path d="M245,791h5v5h-5zM247,790h1v7h-1zM244,793h7v1h-7z" fill="#646464"/>
<path d="M256,791h5v5h-5zM258,790h1v7h-1zM255,793h7v1h-7z" fill="#646464"/>
<path d="M268,791h5v5h-5zM270,790h1v7h-1zM267,793h7v1h-7z" fill="#646464"/>
<path d="M279,791h5v5h-5zM281,790h1v7h-1zM278,793h7v1h-7z" fill="#646464"/>
<path d="M118,803h5v5h-5zM120,802h1v7h-1zM117,805h7v1h-7z" fill="#646464"/>
<path d="M129,803h5v5h-5zM131,802h1v7h-1zM128,805h7v1h-7z" fill="#646464"/>
<path d="M210,803h5v5h-5zM212,802h1v7h-1zM209,805h7v1h-7z" fill="#646464"/>
<path d="M222,803h5v5h-5zM224,802h1v7h-1zM221,805h7v1h-7z" fill="#646464"/>
<path d="M233,803h5v5h-5zM235,802h1v7h-1zM232,805h7v1h-7z" fill="#646464"/>
<path d="M245,803h5v5h-5zM247,802h1v7h-1zM244,805h7v1h-7z" fill="#646464"/>
<path d="M256,803h5v5h-5zM258,802h1v7h-1zM255,805h7v1h-7z" fill="#646464"/>
<path d="M268,803h5v5h-5zM270,802h1v7h-1zM267,805h7v1h-7z" fill="#800000"/>
<path d="M279,803h5v5h-5zM281,802h1v7h-1zM278,805h7v1h-7z" fill="#646464"/>
<path d="M118,814h5v5h-5zM120,813h1v7h-1zM117,816h7v1h-7z" fill="#800000"/>
<path d="M129,814h5v5h-5zM131,813h1v7h-1zM128,816h7v1h-7z" fill="#646464"/>
<path d="M210,814h5v5h-5zM212,813h1v7h-1zM209,816h7v1h-7z" fill="#646464"/>
<path d="M222,814h5v5h-5zM224,813h1v7h-1zM221,816h7v1h-7z" fill="#646464"/>
<path d="M233,814h5v5h-5zM235,813h1v7h-1zM232,816h7v1h-7z" fill="#646464"/>
<path d="M245,814h5v5h-5zM247,813h1v7h-1zM244,816h7v1h-7z" fill="#646464"/>
<path d="M256,814h5v5h-5zM258,813h1v7h-1zM255,816h7v1h-7z" fill="#646464"/>
<path d="M268,814h5v5h-5zM270,813h1v7h-1zM267,816h7v1h-7z" fill="#646464"/>
<path d="M279,814h5v5h-5zM281,813h1v7h-1zM278,816h7v1h-7z" fill="#646464"/>
<path d="M118,826h5v5h-5zM120,825h1v7h-1zM117,828h7v1h-7z" fill="#646464"/>
<path d="M129,826h5v5h-5zM131,825h1v7h-1zM128,828h7v1h-7z" fill="#646464"/>
<path d="M141,826h5v5h-5zM143,825h1v7h-1zM140,828h7v1h-7z" fill="#646464"/>
<path d="M152,826h5v5h-5zM154,825h1v7h-1zM151,828h7v1h-7z" fill="#800000"/>
<path d="M164,826h5v5h-5zM166,825h1v7h-1zM163,828h7v1h-7z" fill="#646464"/>
<path d="M175,826h5v5h-5zM177,825h1v7h-1zM174,828h7v1h-7z" fill="#800000"/>
<path d="M187,826h5v5h-5zM189,825h1v7h-1zM186,828h7v1h-7z" fill="#646464"/>
<path d="M199,826h5v5h-5zM201,825h1v7h-1zM198,828h7v1h-7z" fill="#646464"/>
<path d="M210,826h5v5h-5zM212,825h1v7h-1zM209,828h7v1h-7z" fill="#646464"/>
<path d="M222,826h5v5h-5zM224,825h1v7h-1zM221,828h7v1h-7z" fill="#646464"/>
<path d="M233,826h5v5h-5zM235,825h1v7h-1zM232,828h7v1h-7z" fill="#646464"/>
<path d="M245,826h5v5h-5zM247,825h1v7h-1zM244,828h7v1h-7z" fill="#646464"/>
<path d="M256,826h5v5h-5zM258,825h1v7h-1zM255,828h7v1h-7z" fill="#646464"/>
<path d="M268,826h5v5h-5zM270,825h1v7h-1zM267,828h7v1h-7z" fill="#800000"/>
<path d="M279,826h5v5h-5zM281,825h1v7h-1zM278,828h7v1h-7z" fill="#646464"/>
<path d="M118,837h5v5h-5zM120,836h1v7h-1zM117,839h7v1h-7z" fill="#800000"/>
<path d="M210,837h5v5h-5zM212,836h1v7h-1zM209,839h7v1h-7z" fill="#800000"/>
<path d="M245,837h5v5h-5zM247,836h1v7h-1zM244,839h7v1h-7z" fill="#646464"/>
<path d="M256,837h5v5h-5zM258,836h1v7h-1zM255,839h7v1h-7z" fill="#646464"/>
<path d="M268,837h5v5h-5zM270,836h1v7h-1zM267,839h7v1h-7z" fill="#646464"/>
<path d="M279,837h5v5h-5zM281,836h1v7h-1zM278,839h7v1h-7z" fill="#646464"/>
<path d="M118,849h5v5h-5zM120,848h1v7h-1zM117,851h7v1h-7z" fill="#646464"/>
<path d="M210,849h5v5h-5zM212,848h1v7h-1zM209,851h7v1h-7z" fill="#800000"/>
<path d="M245,849h5v5h-5zM247,848h1v7h-1zM244,851h7v1h-7z" fill="#646464"/>
<path d="M256,849h5v5h-5zM258,848h1v7h-1zM255,851h7v1h-7z" fill="#646464"/>
<path d="M268,849h5v5h-5zM270,848h1v7h-1zM267,851h7v1h-7z" fill="#800000"/>
<path d="M279,849h5v5h-5zM281,848h1v7h-1zM278,851h7v1h-7z" fill="#646464"/>
<path d="M118,860h5v5h-5zM120,859h1v7h-1zM117,862h7v1h-7z" fill="#800000"/>
<path d="M210,860h5v5h-5zM212,859h1v7h-1zM209,862h7v1h-7z" fill="#646464"/>
<path d="M245,860h5v5h-5zM247,859h1v7h-1zM244,862h7v1h-7z" fill="#646464"/>
<path d="M256,860h5v5h-5zM258,859h1v7h-1zM255,862h7v1h-7z" fill="#646464"/>
<path d="M268,860h5v5h-5zM270,859h1v7h-1zM267,862h7v1h-7z" fill="#646464"/>
<path d="M279,860h5v5h-5zM281,859h1v7h-1zM278,862h7v1h-7z" fill="#646464"/>
<path d="M118,872h5v5h-5zM120,871h1v7h-1zM117,874h7v1h-7z" fill="#646464"/>
<path d="M210,872h5v5h-5zM212,871h1v7h-1zM209,874h7v1h-7z" fill="#800000"/>
<path d="M222,872h5v5h-5zM224,871h1v7h-1zM221,874h7v1h-7z" fill="#800000"/>
<path d="M233,872h5v5h-5zM235,871h1v7h-1zM232,874h7v1h-7z" fill="#646464"/>
<path d="M245,872h5v5h-5zM247,871h1v7h-1zM244,874h7v1h-7z" fill="#646464"/>
<path d="M256,872h5v5h-5zM258,871h1v7h-1zM255,874h7v1h-7z" fill="#646464"/>
<path d="M268,872h5v5h-5zM270,871h1v7h-1zM267,874h7v1h-7z" fill="#800000"/>
<path d="M279,872h5v5h-5zM281,871h1v7h-1zM278,874h7v1h-7z" fill="#646464"/>
<path d="M118,884h5v5h-5zM120,883h1v7h-1zM117,886h7v1h-7z" fill="#646464"/>
<path d="M129,884h5v5h-5zM131,883h1v7h-1zM128,886h7v1h-7z" fill="#800000"/>
<path d="M141,884h5v5h-5zM143,883h1v7h-1zM140,886h7v1h-7z" fill="#646464"/>
<path d="M152,884h5v5h-5zM154,883h1v7h-1zM151,886h7v1h-7z" fill="#800000"/>
<path d="M164,884h5v5h-5zM166,883h1v7h-1zM163,886h7v1h-7z" fill="#646464"/>
<path d="M175,884h5v5h-5zM177,883h1v7h-1zM174,886h7v1h-7z" fill="#646464"/>
<path d="M187,884h5v5h-5zM189,883h1v7h-1zM186,886h7v1h-7z" fill="#646464"/>
<path d="M199,884h5v5h-5zM201,883h1v7h-1zM198,886h7v1h-7z" fill="#646464"/>
<path d="M210,884h5v5h-5zM212,883h1v7h-1zM209,886h7v1h-7z" fill="#646464"/>
<path d="M222,884h5v5h-5zM224,883h1v7h-1zM221,886h7v1h-7z" fill="#646464"/>
<path d="M233,884h5v5h-5zM235,883h1v7h-1zM232,886h7v1h-7z" fill="#646464"/>
<path d="M245,884h5v5h-5zM247,883h1v7h-1zM244,886h7v1h-7z" fill="#646464"/>
<path d="M256,884h5v5h-5zM258,883h1v7h-1zM255,886h7v1h-7z" fill="#646464"/>
<path d="M268,884h5v5h-5zM270,883h1v7h-1zM267,886h7v1h-7z" fill="#646464"/>
<path d="M279,884h5v5h-5zM281,883h1v7h-1zM278,886h7v1h-7z" fill="#646464"/>
<text x="140" y="838.2" font-size="27.5" fill="#92b08c" text-anchor="start" textLength="123.6" lengthAdjust="spacingAndGlyphs" >PA_UHB_K</text>
<rect x="127.0" y="900.0" width="14.0" height="7.0" fill="#5e5e5e"/>
<rect x="127.7" y="900.7" width="1.5" height="5.6" fill="#cdcdcd"/>
<rect x="138.8" y="900.7" width="1.5" height="5.6" fill="#cdcdcd"/>
<rect x="129.2" y="900.0" width="9.6" height="7.0" fill="#b6a171"/>
<rect x="134.0" y="911.0" width="7.0" height="13.0" fill="#5e5e5e"/>
<rect x="134.7" y="911.7" width="5.6" height="1.5" fill="#cdcdcd"/>
<rect x="134.7" y="921.8" width="5.6" height="1.5" fill="#cdcdcd"/>
<rect x="134.7" y="913.2" width="5.6" height="8.6" fill="#0a0a0a"/>
<rect x="126.0" y="929.0" width="15.0" height="7.0" fill="#5e5e5e"/>
<rect x="126.7" y="929.7" width="1.5" height="5.6" fill="#cdcdcd"/>
<rect x="138.8" y="929.7" width="1.5" height="5.6" fill="#cdcdcd"/>
<rect x="128.2" y="929.0" width="10.6" height="7.0" fill="#b6a171"/>
<rect x="153.0" y="899.0" width="14.0" height="7.0" fill="#5e5e5e"/>
<rect x="153.7" y="899.7" width="1.5" height="5.6" fill="#cdcdcd"/>
<rect x="164.8" y="899.7" width="1.5" height="5.6" fill="#cdcdcd"/>
<rect x="155.2" y="899.0" width="9.6" height="7.0" fill="#b6a171"/>
<rect x="152.0" y="911.0" width="8.0" height="13.0" fill="#5e5e5e"/>
<rect x="152.7" y="911.7" width="6.6" height="1.5" fill="#cdcdcd"/>
<rect x="152.7" y="921.8" width="6.6" height="1.5" fill="#cdcdcd"/>
<rect x="152.7" y="913.2" width="6.6" height="8.6" fill="#0a0a0a"/>
<rect x="152.0" y="929.0" width="15.0" height="7.0" fill="#5e5e5e"/>
<rect x="152.7" y="929.7" width="1.6" height="5.6" fill="#cdcdcd"/>
<rect x="164.8" y="929.7" width="1.6" height="5.6" fill="#cdcdcd"/>
<rect x="154.2" y="929.0" width="10.5" height="7.0" fill="#b6a171"/>
<rect x="175.0" y="900.0" width="15.0" height="7.0" fill="#5e5e5e"/>
<rect x="175.7" y="900.7" width="1.6" height="5.6" fill="#cdcdcd"/>
<rect x="187.8" y="900.7" width="1.6" height="5.6" fill="#cdcdcd"/>
<rect x="177.2" y="900.0" width="10.5" height="7.0" fill="#b6a171"/>
<rect x="175.0" y="911.0" width="8.0" height="13.0" fill="#5e5e5e"/>
<rect x="175.7" y="911.7" width="6.6" height="1.5" fill="#cdcdcd"/>
<rect x="175.7" y="921.8" width="6.6" height="1.5" fill="#cdcdcd"/>
<rect x="175.7" y="913.2" width="6.6" height="8.6" fill="#0a0a0a"/>
<rect x="176.0" y="929.0" width="14.0" height="7.0" fill="#5e5e5e"/>
<rect x="176.7" y="929.7" width="1.5" height="5.6" fill="#cdcdcd"/>
<rect x="187.8" y="929.7" width="1.5" height="5.6" fill="#cdcdcd"/>
<rect x="178.2" y="929.0" width="9.6" height="7.0" fill="#b6a171"/>
<rect x="197.0" y="900.0" width="8.0" height="15.0" fill="#5e5e5e"/>
<rect x="197.7" y="900.7" width="6.6" height="1.5" fill="#cdcdcd"/>
<rect x="197.7" y="912.8" width="6.6" height="1.5" fill="#cdcdcd"/>
<rect x="197.0" y="902.2" width="8.0" height="10.5" fill="#b6a171"/>
<rect x="208.0" y="900.0" width="8.0" height="15.0" fill="#5e5e5e"/>
<rect x="208.7" y="900.7" width="6.6" height="1.5" fill="#cdcdcd"/>
<rect x="208.7" y="912.8" width="6.6" height="1.5" fill="#cdcdcd"/>
<rect x="208.0" y="902.2" width="8.0" height="10.5" fill="#b6a171"/>
<rect x="220.0" y="901.0" width="9.0" height="22.0" fill="#5e5e5e"/>
<rect x="220.7" y="901.7" width="7.6" height="2.6" fill="#cdcdcd"/>
<rect x="220.7" y="919.7" width="7.6" height="2.6" fill="#cdcdcd"/>
<rect x="220.0" y="904.3" width="9.0" height="15.4" fill="#b6a171"/>
<rect x="235.0" y="901.0" width="9.0" height="22.0" fill="#5e5e5e"/>
<rect x="235.7" y="901.7" width="7.6" height="2.6" fill="#cdcdcd"/>
<rect x="235.7" y="919.7" width="7.6" height="2.6" fill="#cdcdcd"/>
<rect x="235.0" y="904.3" width="9.0" height="15.4" fill="#b6a171"/>
<rect x="376.5" y="504.5" width="88" height="148" fill="none" stroke="#96ba92" stroke-width="1"/>
<rect x="379" y="508" width="7" height="7" fill="#646464"/>
<rect x="391" y="508" width="7" height="7" fill="#800000"/>
<rect x="403" y="508" width="7" height="7" fill="#800000"/>
<rect x="416" y="508" width="7" height="7" fill="#646464"/>
<rect x="428" y="508" width="7" height="7" fill="#800000"/>
<rect x="440" y="508" width="7" height="7" fill="#800000"/>
<rect x="453" y="508" width="7" height="7" fill="#646464"/>
<rect x="379" y="520" width="7" height="7" fill="#800000"/>
<rect x="391" y="520" width="7" height="7" fill="#800000"/>
<rect x="403" y="520" width="7" height="7" fill="#800000"/>
<rect x="416" y="520" width="7" height="7" fill="#646464"/>
<rect x="428" y="520" width="7" height="7" fill="#646464"/>
<rect x="440" y="520" width="7" height="7" fill="#800000"/>
<rect x="453" y="520" width="7" height="7" fill="#800000"/>
<rect x="379" y="532" width="7" height="7" fill="#646464"/>
<rect x="391" y="532" width="7" height="7" fill="#646464"/>
<rect x="403" y="532" width="7" height="7" fill="#646464"/>
<rect x="416" y="532" width="7" height="7" fill="#800000"/>
<rect x="428" y="532" width="7" height="7" fill="#646464"/>
<rect x="440" y="532" width="7" height="7" fill="#646464"/>
<rect x="453" y="532" width="7" height="7" fill="#646464"/>
<rect x="379" y="545" width="7" height="7" fill="#00868b"/>
<rect x="391" y="545" width="7" height="7" fill="#800000"/>
<rect x="403" y="545" width="7" height="7" fill="#646464"/>
<rect x="416" y="545" width="7" height="7" fill="#646464"/>
<rect x="428" y="545" width="7" height="7" fill="#646464"/>
<rect x="440" y="545" width="7" height="7" fill="#800000"/>
<rect x="453" y="545" width="7" height="7" fill="#00868b"/>
<rect x="379" y="557" width="7" height="7" fill="#646464"/>
<rect x="391" y="557" width="7" height="7" fill="#800000"/>
<rect x="403" y="557" width="7" height="7" fill="#646464"/>
<rect x="416" y="557" width="7" height="7" fill="#800000"/>
<rect x="428" y="557" width="7" height="7" fill="#646464"/>
<rect x="440" y="557" width="7" height="7" fill="#800000"/>
<rect x="453" y="557" width="7" height="7" fill="#646464"/>
<rect x="379" y="569" width="7" height="7" fill="#800000"/>
<rect x="391" y="569" width="7" height="7" fill="#646464"/>
<rect x="403" y="569" width="7" height="7" fill="#800000"/>
<rect x="416" y="569" width="7" height="7" fill="#800000"/>
<rect x="428" y="569" width="7" height="7" fill="#800000"/>
<rect x="440" y="569" width="7" height="7" fill="#646464"/>
<rect x="453" y="569" width="7" height="7" fill="#646464"/>
<rect x="379" y="581" width="7" height="7" fill="#800000"/>
<rect x="391" y="581" width="7" height="7" fill="#646464"/>
<rect x="403" y="581" width="7" height="7" fill="#646464"/>
<rect x="416" y="581" width="7" height="7" fill="#800000"/>
<rect x="428" y="581" width="7" height="7" fill="#800000"/>
<rect x="440" y="581" width="7" height="7" fill="#800000"/>
<rect x="453" y="581" width="7" height="7" fill="#800000"/>
<rect x="379" y="593" width="7" height="7" fill="#00868b"/>
<rect x="391" y="593" width="7" height="7" fill="#646464"/>
<rect x="403" y="593" width="7" height="7" fill="#646464"/>
<rect x="416" y="593" width="7" height="7" fill="#800000"/>
<rect x="428" y="593" width="7" height="7" fill="#646464"/>
<rect x="440" y="593" width="7" height="7" fill="#646464"/>
<rect x="453" y="593" width="7" height="7" fill="#646464"/>
<rect x="379" y="606" width="7" height="7" fill="#800000"/>
<rect x="391" y="606" width="7" height="7" fill="#646464"/>
<rect x="403" y="606" width="7" height="7" fill="#800000"/>
<rect x="416" y="606" width="7" height="7" fill="#646464"/>
<rect x="428" y="606" width="7" height="7" fill="#646464"/>
<rect x="440" y="606" width="7" height="7" fill="#646464"/>
<rect x="453" y="606" width="7" height="7" fill="#800000"/>
<rect x="379" y="618" width="7" height="7" fill="#800000"/>
<rect x="391" y="618" width="7" height="7" fill="#646464"/>
<rect x="403" y="618" width="7" height="7" fill="#800000"/>
<rect x="416" y="618" width="7" height="7" fill="#646464"/>
<rect x="428" y="618" width="7" height="7" fill="#800000"/>
<rect x="440" y="618" width="7" height="7" fill="#646464"/>
<rect x="453" y="618" width="7" height="7" fill="#800000"/>
<rect x="379" y="630" width="7" height="7" fill="#646464"/>
<rect x="391" y="630" width="7" height="7" fill="#646464"/>
<rect x="403" y="630" width="7" height="7" fill="#646464"/>
<rect x="416" y="630" width="7" height="7" fill="#646464"/>
<rect x="428" y="630" width="7" height="7" fill="#646464"/>
<rect x="440" y="630" width="7" height="7" fill="#646464"/>
<rect x="453" y="630" width="7" height="7" fill="#646464"/>
<rect x="379" y="642" width="7" height="7" fill="#646464"/>
<rect x="391" y="642" width="7" height="7" fill="#646464"/>
<rect x="403" y="642" width="7" height="7" fill="#800000"/>
<rect x="416" y="642" width="7" height="7" fill="#00868b"/>
<rect x="428" y="642" width="7" height="7" fill="#800000"/>
<rect x="440" y="642" width="7" height="7" fill="#646464"/>
<rect x="453" y="642" width="7" height="7" fill="#646464"/>
<text x="432" y="621.7" font-size="32" fill="#92b08c" text-anchor="start" textLength="90" lengthAdjust="spacingAndGlyphs" transform="rotate(-90 432 621.7)" >ETIC_K</text>
<rect x="370.0" y="465.0" width="17.0" height="34.0" fill="#5e5e5e"/>
<rect x="370.7" y="465.7" width="15.6" height="4.4" fill="#cdcdcd"/>
<rect x="370.7" y="493.9" width="15.6" height="4.4" fill="#cdcdcd"/>
<rect x="370.0" y="470.1" width="17.0" height="23.7" fill="#b6a171"/>
<rect x="392.0" y="465.0" width="18.0" height="34.0" fill="#5e5e5e"/>
<rect x="392.7" y="465.7" width="16.6" height="4.4" fill="#cdcdcd"/>
<rect x="392.7" y="493.9" width="16.6" height="4.4" fill="#cdcdcd"/>
<rect x="392.0" y="470.1" width="18.0" height="23.7" fill="#b6a171"/>
<rect x="415" y="467" width="61" height="22" fill="#a3a394"/>
<circle cx="425.7" cy="477.9" r="3.5" fill="#ffffff"/>
<text x="429" y="482.4" font-size="12.6" fill="#7f9f7a" text-anchor="start" textLength="34" lengthAdjust="spacingAndGlyphs" >LA902</text>
<rect x="479.0" y="467.0" width="38.0" height="13.0" fill="#5e5e5e"/>
<rect x="479.7" y="467.7" width="5.1" height="11.6" fill="#cdcdcd"/>
<rect x="511.2" y="467.7" width="5.1" height="11.6" fill="#cdcdcd"/>
<rect x="484.8" y="467.0" width="26.4" height="13.0" fill="#b6a171"/>
<rect x="470.0" y="501.0" width="35.0" height="17.0" fill="#5e5e5e"/>
<rect x="470.7" y="501.7" width="4.5" height="15.6" fill="#cdcdcd"/>
<rect x="499.8" y="501.7" width="4.5" height="15.6" fill="#cdcdcd"/>
<rect x="475.2" y="501.0" width="24.6" height="17.0" fill="#b6a171"/>
<rect x="334" y="514" width="33" height="55" fill="#a3a394"/>
<circle cx="351.0" cy="523.4" r="5" fill="#ffffff"/>
<text x="357" y="559.5" font-size="12.6" fill="#7f9f7a" text-anchor="start" textLength="32" lengthAdjust="spacingAndGlyphs" transform="rotate(-90 357 559.5)" >LA901</text>
<rect x="472" y="538" width="33" height="55" fill="#a3a394"/>
<circle cx="489.2" cy="584.4" r="5" fill="#ffffff"/>
<text x="493.7" y="577" font-size="12.6" fill="#7f9f7a" text-anchor="start" textLength="29" lengthAdjust="spacingAndGlyphs" transform="rotate(-90 493.7 577)" >LA900</text>
<rect x="347.0" y="577.0" width="22.0" height="8.0" fill="#5e5e5e"/>
<rect x="347.7" y="577.7" width="2.6" height="6.6" fill="#cdcdcd"/>
<rect x="365.7" y="577.7" width="2.6" height="6.6" fill="#cdcdcd"/>
<rect x="350.3" y="577.0" width="15.4" height="8.0" fill="#b6a171"/>
<rect x="331.0" y="600.0" width="39.0" height="14.0" fill="#5e5e5e"/>
<rect x="331.7" y="600.7" width="5.2" height="12.6" fill="#cdcdcd"/>
<rect x="364.1" y="600.7" width="5.2" height="12.6" fill="#cdcdcd"/>
<rect x="336.9" y="600.0" width="27.2" height="14.0" fill="#b6a171"/>
<rect x="349.0" y="622.0" width="8.0" height="15.0" fill="#5e5e5e"/>
<rect x="349.7" y="622.7" width="6.6" height="1.5" fill="#cdcdcd"/>
<rect x="349.7" y="634.8" width="6.6" height="1.5" fill="#cdcdcd"/>
<rect x="349.0" y="624.2" width="8.0" height="10.6" fill="#b6a171"/>
<rect x="360.0" y="622.0" width="8.0" height="15.0" fill="#5e5e5e"/>
<rect x="360.7" y="622.7" width="6.6" height="1.5" fill="#cdcdcd"/>
<rect x="360.7" y="634.8" width="6.6" height="1.5" fill="#cdcdcd"/>
<rect x="360.0" y="624.2" width="8.0" height="10.6" fill="#b6a171"/>
<rect x="472.0" y="603.0" width="40.0" height="13.0" fill="#5e5e5e"/>
<rect x="472.7" y="603.7" width="5.2" height="11.6" fill="#cdcdcd"/>
<rect x="506.1" y="603.7" width="5.2" height="11.6" fill="#cdcdcd"/>
<rect x="477.9" y="603.0" width="28.2" height="13.0" fill="#b6a171"/>
<rect x="499.0" y="625.0" width="16.0" height="8.0" fill="#5e5e5e"/>
<rect x="499.7" y="625.7" width="1.6" height="6.6" fill="#cdcdcd"/>
<rect x="512.7" y="625.7" width="1.6" height="6.6" fill="#cdcdcd"/>
<rect x="501.3" y="625.0" width="11.3" height="8.0" fill="#b6a171"/>
<rect x="470.0" y="640.0" width="35.0" height="18.0" fill="#5e5e5e"/>
<rect x="470.7" y="640.7" width="4.5" height="16.6" fill="#cdcdcd"/>
<rect x="499.8" y="640.7" width="4.5" height="16.6" fill="#cdcdcd"/>
<rect x="475.2" y="640.0" width="24.6" height="18.0" fill="#b6a171"/>
<rect x="470.0" y="666.0" width="35.0" height="18.0" fill="#5e5e5e"/>
<rect x="470.7" y="666.7" width="4.5" height="16.6" fill="#cdcdcd"/>
<rect x="499.8" y="666.7" width="4.5" height="16.6" fill="#cdcdcd"/>
<rect x="475.2" y="666.0" width="24.6" height="18.0" fill="#b6a171"/>
<rect x="403.0" y="659.0" width="8.0" height="13.0" fill="#5e5e5e"/>
<rect x="403.7" y="659.7" width="6.6" height="1.5" fill="#cdcdcd"/>
<rect x="403.7" y="669.8" width="6.6" height="1.5" fill="#cdcdcd"/>
<rect x="403.0" y="661.2" width="8.0" height="8.6" fill="#b6a171"/>
<rect x="413.0" y="659.0" width="8.0" height="13.0" fill="#5e5e5e"/>
<rect x="413.7" y="659.7" width="6.6" height="1.5" fill="#cdcdcd"/>
<rect x="413.7" y="669.8" width="6.6" height="1.5" fill="#cdcdcd"/>
<rect x="413.0" y="661.2" width="8.0" height="8.6" fill="#b6a171"/>
<rect x="424.0" y="659.0" width="8.0" height="13.0" fill="#5e5e5e"/>
<rect x="424.7" y="659.7" width="6.6" height="1.5" fill="#cdcdcd"/>
<rect x="424.7" y="669.8" width="6.6" height="1.5" fill="#cdcdcd"/>
<rect x="424.0" y="661.2" width="8.0" height="8.6" fill="#b6a171"/>
<rect x="435.0" y="659.0" width="8.0" height="13.0" fill="#5e5e5e"/>
<rect x="435.7" y="659.7" width="6.6" height="1.5" fill="#cdcdcd"/>
<rect x="435.7" y="669.8" width="6.6" height="1.5" fill="#cdcdcd"/>
<rect x="435.0" y="661.2" width="8.0" height="8.6" fill="#b6a171"/>
<rect x="445.0" y="659.0" width="8.0" height="13.0" fill="#5e5e5e"/>
<rect x="445.7" y="659.7" width="6.6" height="1.5" fill="#cdcdcd"/>
<rect x="445.7" y="669.8" width="6.6" height="1.5" fill="#cdcdcd"/>
<rect x="445.0" y="661.2" width="8.0" height="8.6" fill="#b6a171"/>
<rect x="456.0" y="658.0" width="10.0" height="21.0" fill="#5e5e5e"/>
<rect x="456.7" y="658.7" width="8.6" height="2.5" fill="#cdcdcd"/>
<rect x="456.7" y="675.8" width="8.6" height="2.5" fill="#cdcdcd"/>
<rect x="456.0" y="661.2" width="10.0" height="14.6" fill="#b6a171"/>
<rect x="435.0" y="677.0" width="15.0" height="7.0" fill="#5e5e5e"/>
<rect x="435.7" y="677.7" width="1.5" height="5.6" fill="#cdcdcd"/>
<rect x="447.8" y="677.7" width="1.5" height="5.6" fill="#cdcdcd"/>
<rect x="437.2" y="677.0" width="10.5" height="7.0" fill="#b6a171"/>
<rect x="311.5" y="725.5" width="178" height="139" fill="none" stroke="#96ba92" stroke-width="1"/>
<path d="M317,731h5v5h-5zM319,730h1v7h-1zM316,733h7v1h-7z" fill="#646464"/>
<path d="M328,731h5v5h-5zM330,730h1v7h-1zM327,733h7v1h-7z" fill="#646464"/>
<path d="M340,731h5v5h-5zM342,730h1v7h-1zM339,733h7v1h-7z" fill="#646464"/>
<path d="M351,731h5v5h-5zM353,730h1v7h-1zM350,733h7v1h-7z" fill="#646464"/>
<path d="M363,731h5v5h-5zM365,730h1v7h-1zM362,733h7v1h-7z" fill="#646464"/>
<path d="M374,731h5v5h-5zM376,730h1v7h-1zM373,733h7v1h-7z" fill="#646464"/>
<path d="M385,731h5v5h-5zM387,730h1v7h-1zM384,733h7v1h-7z" fill="#646464"/>
<path d="M397,731h5v5h-5zM399,730h1v7h-1zM396,733h7v1h-7z" fill="#646464"/>
<path d="M408,731h5v5h-5zM410,730h1v7h-1zM407,733h7v1h-7z" fill="#646464"/>
<path d="M420,731h5v5h-5zM422,730h1v7h-1zM419,733h7v1h-7z" fill="#646464"/>
<path d="M431,731h5v5h-5zM433,730h1v7h-1zM430,733h7v1h-7z" fill="#646464"/>
<path d="M443,731h5v5h-5zM445,730h1v7h-1zM442,733h7v1h-7z" fill="#646464"/>
<path d="M454,731h5v5h-5zM456,730h1v7h-1zM453,733h7v1h-7z" fill="#646464"/>
<path d="M466,731h5v5h-5zM468,730h1v7h-1zM465,733h7v1h-7z" fill="#646464"/>
<path d="M477,731h5v5h-5zM479,730h1v7h-1zM476,733h7v1h-7z" fill="#646464"/>
<path d="M317,743h5v5h-5zM319,742h1v7h-1zM316,745h7v1h-7z" fill="#646464"/>
<path d="M328,743h5v5h-5zM330,742h1v7h-1zM327,745h7v1h-7z" fill="#800000"/>
<path d="M397,743h5v5h-5zM399,742h1v7h-1zM396,745h7v1h-7z" fill="#800000"/>
<path d="M454,743h5v5h-5zM456,742h1v7h-1zM453,745h7v1h-7z" fill="#646464"/>
<path d="M466,743h5v5h-5zM468,742h1v7h-1zM465,745h7v1h-7z" fill="#646464"/>
<path d="M477,743h5v5h-5zM479,742h1v7h-1zM476,745h7v1h-7z" fill="#646464"/>
<path d="M317,755h5v5h-5zM319,754h1v7h-1zM316,757h7v1h-7z" fill="#646464"/>
<path d="M328,755h5v5h-5zM330,754h1v7h-1zM327,757h7v1h-7z" fill="#646464"/>
<path d="M397,755h5v5h-5zM399,754h1v7h-1zM396,757h7v1h-7z" fill="#646464"/>
<path d="M477,755h5v5h-5zM479,754h1v7h-1zM476,757h7v1h-7z" fill="#646464"/>
<path d="M317,767h5v5h-5zM319,766h1v7h-1zM316,769h7v1h-7z" fill="#646464"/>
<path d="M328,767h5v5h-5zM330,766h1v7h-1zM327,769h7v1h-7z" fill="#800000"/>
<path d="M397,767h5v5h-5zM399,766h1v7h-1zM396,769h7v1h-7z" fill="#646464"/>
<path d="M477,767h5v5h-5zM479,766h1v7h-1zM476,769h7v1h-7z" fill="#646464"/>
<path d="M317,779h5v5h-5zM319,778h1v7h-1zM316,781h7v1h-7z" fill="#646464"/>
<path d="M328,779h5v5h-5zM330,778h1v7h-1zM327,781h7v1h-7z" fill="#646464"/>
<path d="M397,779h5v5h-5zM399,778h1v7h-1zM396,781h7v1h-7z" fill="#646464"/>
<path d="M477,779h5v5h-5zM479,778h1v7h-1zM476,781h7v1h-7z" fill="#646464"/>
<path d="M317,791h5v5h-5zM319,790h1v7h-1zM316,793h7v1h-7z" fill="#646464"/>
<path d="M328,791h5v5h-5zM330,790h1v7h-1zM327,793h7v1h-7z" fill="#800000"/>
<path d="M397,791h5v5h-5zM399,790h1v7h-1zM396,793h7v1h-7z" fill="#646464"/>
<path d="M477,791h5v5h-5zM479,790h1v7h-1zM476,793h7v1h-7z" fill="#646464"/>
<path d="M317,803h5v5h-5zM319,802h1v7h-1zM316,805h7v1h-7z" fill="#646464"/>
<path d="M328,803h5v5h-5zM330,802h1v7h-1zM327,805h7v1h-7z" fill="#646464"/>
<path d="M397,803h5v5h-5zM399,802h1v7h-1zM396,805h7v1h-7z" fill="#646464"/>
<path d="M408,803h5v5h-5zM410,802h1v7h-1zM407,805h7v1h-7z" fill="#646464"/>
<path d="M420,803h5v5h-5zM422,802h1v7h-1zM419,805h7v1h-7z" fill="#646464"/>
<path d="M431,803h5v5h-5zM433,802h1v7h-1zM430,805h7v1h-7z" fill="#646464"/>
<path d="M443,803h5v5h-5zM445,802h1v7h-1zM442,805h7v1h-7z" fill="#800000"/>
<path d="M454,803h5v5h-5zM456,802h1v7h-1zM453,805h7v1h-7z" fill="#800000"/>
<path d="M466,803h5v5h-5zM468,802h1v7h-1zM465,805h7v1h-7z" fill="#646464"/>
<path d="M477,803h5v5h-5zM479,802h1v7h-1zM476,805h7v1h-7z" fill="#646464"/>
<path d="M317,815h5v5h-5zM319,814h1v7h-1zM316,817h7v1h-7z" fill="#646464"/>
<path d="M328,815h5v5h-5zM330,814h1v7h-1zM327,817h7v1h-7z" fill="#800000"/>
<path d="M397,815h5v5h-5zM399,814h1v7h-1zM396,817h7v1h-7z" fill="#646464"/>
<path d="M408,815h5v5h-5zM410,814h1v7h-1zM407,817h7v1h-7z" fill="#646464"/>
<path d="M420,815h5v5h-5zM422,814h1v7h-1zM419,817h7v1h-7z" fill="#646464"/>
<path d="M431,815h5v5h-5zM433,814h1v7h-1zM430,817h7v1h-7z" fill="#646464"/>
<path d="M443,815h5v5h-5zM445,814h1v7h-1zM442,817h7v1h-7z" fill="#646464"/>
<path d="M454,815h5v5h-5zM456,814h1v7h-1zM453,817h7v1h-7z" fill="#646464"/>
<path d="M466,815h5v5h-5zM468,814h1v7h-1zM465,817h7v1h-7z" fill="#646464"/>
<path d="M477,815h5v5h-5zM479,814h1v7h-1zM476,817h7v1h-7z" fill="#646464"/>
<path d="M317,828h5v5h-5zM319,827h1v7h-1zM316,830h7v1h-7z" fill="#646464"/>
<path d="M328,828h5v5h-5zM330,827h1v7h-1zM327,830h7v1h-7z" fill="#646464"/>
<path d="M397,828h5v5h-5zM399,827h1v7h-1zM396,830h7v1h-7z" fill="#646464"/>
<path d="M408,828h5v5h-5zM410,827h1v7h-1zM407,830h7v1h-7z" fill="#646464"/>
<path d="M420,828h5v5h-5zM422,827h1v7h-1zM419,830h7v1h-7z" fill="#646464"/>
<path d="M431,828h5v5h-5zM433,827h1v7h-1zM430,830h7v1h-7z" fill="#646464"/>
<path d="M443,828h5v5h-5zM445,827h1v7h-1zM442,830h7v1h-7z" fill="#646464"/>
<path d="M454,828h5v5h-5zM456,827h1v7h-1zM453,830h7v1h-7z" fill="#646464"/>
<path d="M466,828h5v5h-5zM468,827h1v7h-1zM465,830h7v1h-7z" fill="#646464"/>
<path d="M477,828h5v5h-5zM479,827h1v7h-1zM476,830h7v1h-7z" fill="#646464"/>
<path d="M317,840h5v5h-5zM319,839h1v7h-1zM316,842h7v1h-7z" fill="#646464"/>
<path d="M328,840h5v5h-5zM330,839h1v7h-1zM327,842h7v1h-7z" fill="#800000"/>
<path d="M340,840h5v5h-5zM342,839h1v7h-1zM339,842h7v1h-7z" fill="#646464"/>
<path d="M351,840h5v5h-5zM353,839h1v7h-1zM350,842h7v1h-7z" fill="#800000"/>
<path d="M363,840h5v5h-5zM365,839h1v7h-1zM362,842h7v1h-7z" fill="#800000"/>
<path d="M374,840h5v5h-5zM376,839h1v7h-1zM373,842h7v1h-7z" fill="#800000"/>
<path d="M385,840h5v5h-5zM387,839h1v7h-1zM384,842h7v1h-7z" fill="#646464"/>
<path d="M397,840h5v5h-5zM399,839h1v7h-1zM396,842h7v1h-7z" fill="#800000"/>
<path d="M408,840h5v5h-5zM410,839h1v7h-1zM407,842h7v1h-7z" fill="#800000"/>
<path d="M420,840h5v5h-5zM422,839h1v7h-1zM419,842h7v1h-7z" fill="#800000"/>
<path d="M431,840h5v5h-5zM433,839h1v7h-1zM430,842h7v1h-7z" fill="#646464"/>
<path d="M443,840h5v5h-5zM445,839h1v7h-1zM442,842h7v1h-7z" fill="#800000"/>
<path d="M454,840h5v5h-5zM456,839h1v7h-1zM453,842h7v1h-7z" fill="#646464"/>
<path d="M466,840h5v5h-5zM468,839h1v7h-1zM465,842h7v1h-7z" fill="#800000"/>
<path d="M477,840h5v5h-5zM479,839h1v7h-1zM476,842h7v1h-7z" fill="#646464"/>
<path d="M317,852h5v5h-5zM319,851h1v7h-1zM316,854h7v1h-7z" fill="#646464"/>
<path d="M328,852h5v5h-5zM330,851h1v7h-1zM327,854h7v1h-7z" fill="#646464"/>
<path d="M340,852h5v5h-5zM342,851h1v7h-1zM339,854h7v1h-7z" fill="#646464"/>
<path d="M351,852h5v5h-5zM353,851h1v7h-1zM350,854h7v1h-7z" fill="#646464"/>
<path d="M363,852h5v5h-5zM365,851h1v7h-1zM362,854h7v1h-7z" fill="#646464"/>
<path d="M374,852h5v5h-5zM376,851h1v7h-1zM373,854h7v1h-7z" fill="#646464"/>
<path d="M385,852h5v5h-5zM387,851h1v7h-1zM384,854h7v1h-7z" fill="#646464"/>
<path d="M397,852h5v5h-5zM399,851h1v7h-1zM396,854h7v1h-7z" fill="#646464"/>
<path d="M408,852h5v5h-5zM410,851h1v7h-1zM407,854h7v1h-7z" fill="#646464"/>
<path d="M420,852h5v5h-5zM422,851h1v7h-1zM419,854h7v1h-7z" fill="#646464"/>
<path d="M431,852h5v5h-5zM433,851h1v7h-1zM430,854h7v1h-7z" fill="#646464"/>
<path d="M443,852h5v5h-5zM445,851h1v7h-1zM442,854h7v1h-7z" fill="#646464"/>
<path d="M454,852h5v5h-5zM456,851h1v7h-1zM453,854h7v1h-7z" fill="#646464"/>
<path d="M466,852h5v5h-5zM468,851h1v7h-1zM465,854h7v1h-7z" fill="#646464"/>
<path d="M477,852h5v5h-5zM479,851h1v7h-1zM476,854h7v1h-7z" fill="#646464"/>
<text x="339.4" y="805.8" font-size="32" fill="#92b08c" text-anchor="start" textLength="122" lengthAdjust="spacingAndGlyphs" >PA_LB_K</text>
<rect x="494.0" y="726.0" width="6.0" height="14.0" fill="#5e5e5e"/>
<rect x="494.7" y="726.7" width="4.6" height="1.5" fill="#cdcdcd"/>
<rect x="494.7" y="737.8" width="4.6" height="1.5" fill="#cdcdcd"/>
<rect x="494.0" y="728.2" width="6.0" height="9.6" fill="#b6a171"/>
<rect x="494.0" y="746.0" width="6.0" height="13.0" fill="#5e5e5e"/>
<rect x="494.7" y="746.7" width="4.6" height="1.5" fill="#cdcdcd"/>
<rect x="494.7" y="756.8" width="4.6" height="1.5" fill="#cdcdcd"/>
<rect x="494.0" y="748.2" width="6.0" height="8.6" fill="#b6a171"/>
<rect x="329.0" y="870.0" width="15.0" height="6.0" fill="#5e5e5e"/>
<rect x="329.7" y="870.7" width="1.5" height="4.6" fill="#cdcdcd"/>
<rect x="341.8" y="870.7" width="1.5" height="4.6" fill="#cdcdcd"/>
<rect x="331.2" y="870.0" width="10.6" height="6.0" fill="#b6a171"/>
<rect x="320.0" y="881.0" width="15.0" height="7.0" fill="#5e5e5e"/>
<rect x="320.7" y="881.7" width="1.5" height="5.6" fill="#cdcdcd"/>
<rect x="332.8" y="881.7" width="1.5" height="5.6" fill="#cdcdcd"/>
<rect x="322.2" y="881.7" width="10.6" height="5.6" fill="#0a0a0a"/>
<rect x="351.0" y="870.0" width="8.0" height="13.0" fill="#5e5e5e"/>
<rect x="351.7" y="870.7" width="6.6" height="1.5" fill="#cdcdcd"/>
<rect x="351.7" y="880.8" width="6.6" height="1.5" fill="#cdcdcd"/>
<rect x="351.0" y="872.2" width="8.0" height="8.6" fill="#b6a171"/>
<rect x="362.0" y="871.0" width="8.0" height="13.0" fill="#5e5e5e"/>
<rect x="362.7" y="871.7" width="6.6" height="1.5" fill="#cdcdcd"/>
<rect x="362.7" y="881.8" width="6.6" height="1.5" fill="#cdcdcd"/>
<rect x="362.0" y="873.2" width="8.0" height="8.6" fill="#b6a171"/>
<rect x="373.0" y="871.0" width="8.0" height="13.0" fill="#5e5e5e"/>
<rect x="373.7" y="871.7" width="6.6" height="1.5" fill="#cdcdcd"/>
<rect x="373.7" y="881.8" width="6.6" height="1.5" fill="#cdcdcd"/>
<rect x="373.0" y="873.2" width="8.0" height="8.6" fill="#b6a171"/>
<rect x="370.0" y="889.0" width="15.0" height="7.0" fill="#5e5e5e"/>
<rect x="370.7" y="889.7" width="1.5" height="5.6" fill="#cdcdcd"/>
<rect x="382.8" y="889.7" width="1.5" height="5.6" fill="#cdcdcd"/>
<rect x="372.2" y="889.7" width="10.6" height="5.6" fill="#0a0a0a"/>
<rect x="405.0" y="870.0" width="14.0" height="6.0" fill="#5e5e5e"/>
<rect x="405.7" y="870.7" width="1.5" height="4.6" fill="#cdcdcd"/>
<rect x="416.8" y="870.7" width="1.5" height="4.6" fill="#cdcdcd"/>
<rect x="407.2" y="870.0" width="9.6" height="6.0" fill="#b6a171"/>
<rect x="424.0" y="870.0" width="14.0" height="6.0" fill="#5e5e5e"/>
<rect x="424.7" y="870.7" width="1.5" height="4.6" fill="#cdcdcd"/>
<rect x="435.8" y="870.7" width="1.5" height="4.6" fill="#cdcdcd"/>
<rect x="426.2" y="870.0" width="9.6" height="6.0" fill="#b6a171"/>
<rect x="443.0" y="870.0" width="15.0" height="6.0" fill="#5e5e5e"/>
<rect x="443.7" y="870.7" width="1.6" height="4.6" fill="#cdcdcd"/>
<rect x="455.7" y="870.7" width="1.6" height="4.6" fill="#cdcdcd"/>
<rect x="445.3" y="870.0" width="10.4" height="6.0" fill="#b6a171"/>
<rect x="401.0" y="880.0" width="8.0" height="15.0" fill="#5e5e5e"/>
<rect x="401.7" y="880.7" width="6.6" height="1.5" fill="#cdcdcd"/>
<rect x="401.7" y="892.8" width="6.6" height="1.5" fill="#cdcdcd"/>
<rect x="401.0" y="882.2" width="8.0" height="10.6" fill="#b6a171"/>
<rect x="412.0" y="880.0" width="7.0" height="15.0" fill="#5e5e5e"/>
<rect x="412.7" y="880.7" width="5.6" height="1.5" fill="#cdcdcd"/>
<rect x="412.7" y="892.8" width="5.6" height="1.5" fill="#cdcdcd"/>
<rect x="412.7" y="882.2" width="5.6" height="10.6" fill="#0a0a0a"/>
<rect x="422.0" y="880.0" width="8.0" height="15.0" fill="#5e5e5e"/>
<rect x="422.7" y="880.7" width="6.6" height="1.5" fill="#cdcdcd"/>
<rect x="422.7" y="892.8" width="6.6" height="1.5" fill="#cdcdcd"/>
<rect x="422.7" y="882.2" width="6.6" height="10.6" fill="#0a0a0a"/>
<rect x="443.0" y="880.0" width="15.0" height="7.0" fill="#5e5e5e"/>
<rect x="443.7" y="880.7" width="1.6" height="5.6" fill="#cdcdcd"/>
<rect x="455.7" y="880.7" width="1.6" height="5.6" fill="#cdcdcd"/>
<rect x="445.3" y="880.0" width="10.4" height="7.0" fill="#b6a171"/>
<rect x="596" y="557.5" width="38" height="32" fill="#6b6400"/>
<rect x="596.5" y="558" width="37" height="31" fill="none" stroke="#8f8a10" stroke-width="1"/>
<rect x="597.5" y="559" width="35" height="29" fill="none" stroke="#cfd35a" stroke-width="1.2"/>
<path d="M596,584.3 L634,584" stroke="#3ce03c" stroke-width="1.3" fill="none"/>
<rect x="601" y="559" width="5" height="6" fill="#c06400"/>
<rect x="612" y="559" width="5" height="6" fill="#c06400"/>
<rect x="623" y="559" width="5" height="6" fill="#a39c45"/>
<rect x="598" y="570" width="6" height="5" fill="#c06400"/>
<rect x="625" y="570" width="6" height="5" fill="#c06400"/>
<rect x="601" y="581" width="5" height="6" fill="#c06400"/>
<rect x="612" y="577" width="5" height="10" fill="#c06400"/>
<rect x="623" y="581" width="5" height="6" fill="#ffff00"/>
<text x="604.6" y="575.6" font-size="8" fill="#b8b850" text-anchor="start" textLength="20.2" lengthAdjust="spacingAndGlyphs" >U7650</text>
<rect x="621.5" y="606.5" width="6" height="3" fill="none" stroke="#96ba92" stroke-width="1"/>
<rect x="621" y="601" width="7" height="6" fill="#ffff00"/>
<rect x="621" y="609" width="7" height="6" fill="#800000"/>
<rect x="601.0" y="595.0" width="15.0" height="7.0" fill="#5e5e5e"/>
<rect x="601.7" y="595.7" width="1.5" height="5.6" fill="#cdcdcd"/>
<rect x="613.8" y="595.7" width="1.5" height="5.6" fill="#cdcdcd"/>
<rect x="603.2" y="595.0" width="10.6" height="7.0" fill="#b6a171"/>
<rect x="589.0" y="602.0" width="8.0" height="16.0" fill="#5e5e5e"/>
<rect x="589.7" y="602.7" width="6.6" height="1.6" fill="#cdcdcd"/>
<rect x="589.7" y="615.7" width="6.6" height="1.6" fill="#cdcdcd"/>
<rect x="589.7" y="604.3" width="6.6" height="11.4" fill="#0a0a0a"/>
<rect x="601.0" y="610.0" width="15.0" height="7.0" fill="#5e5e5e"/>
<rect x="601.7" y="610.7" width="1.5" height="5.6" fill="#cdcdcd"/>
<rect x="613.8" y="610.7" width="1.5" height="5.6" fill="#cdcdcd"/>
<rect x="603.2" y="610.7" width="10.6" height="5.6" fill="#0a0a0a"/>
<rect x="601.0" y="621.0" width="15.0" height="7.0" fill="#5e5e5e"/>
<rect x="601.7" y="621.7" width="1.5" height="5.6" fill="#cdcdcd"/>
<rect x="613.8" y="621.7" width="1.5" height="5.6" fill="#cdcdcd"/>
<rect x="603.2" y="621.7" width="10.6" height="5.6" fill="#0a0a0a"/>
<rect x="573.0" y="631.0" width="15.0" height="8.0" fill="#5e5e5e"/>
<rect x="573.7" y="631.7" width="1.5" height="6.6" fill="#cdcdcd"/>
<rect x="585.8" y="631.7" width="1.5" height="6.6" fill="#cdcdcd"/>
<rect x="575.2" y="631.7" width="10.6" height="6.6" fill="#0a0a0a"/>
<rect x="654.0" y="588.0" width="14.0" height="8.0" fill="#5e5e5e"/>
<rect x="654.7" y="588.7" width="1.5" height="6.6" fill="#cdcdcd"/>
<rect x="665.8" y="588.7" width="1.5" height="6.6" fill="#cdcdcd"/>
<rect x="656.2" y="588.0" width="9.6" height="8.0" fill="#b6a171"/>
<rect x="631.0" y="601.0" width="8.0" height="14.0" fill="#5e5e5e"/>
<rect x="631.7" y="601.7" width="6.6" height="1.5" fill="#cdcdcd"/>
<rect x="631.7" y="612.8" width="6.6" height="1.5" fill="#cdcdcd"/>
<rect x="631.7" y="603.2" width="6.6" height="9.6" fill="#0a0a0a"/>
<rect x="642.0" y="600.0" width="7.0" height="15.0" fill="#5e5e5e"/>
<rect x="642.7" y="600.7" width="5.6" height="1.5" fill="#cdcdcd"/>
<rect x="642.7" y="612.8" width="5.6" height="1.5" fill="#cdcdcd"/>
<rect x="642.0" y="602.2" width="7.0" height="10.5" fill="#b6a171"/>
<rect x="652.0" y="600.0" width="8.0" height="15.0" fill="#5e5e5e"/>
<rect x="652.7" y="600.7" width="6.6" height="1.5" fill="#cdcdcd"/>
<rect x="652.7" y="612.8" width="6.6" height="1.5" fill="#cdcdcd"/>
<rect x="652.7" y="602.2" width="6.6" height="10.5" fill="#0a0a0a"/>
<rect x="663.0" y="600.0" width="8.0" height="15.0" fill="#5e5e5e"/>
<rect x="663.7" y="600.7" width="6.6" height="1.5" fill="#cdcdcd"/>
<rect x="663.7" y="612.8" width="6.6" height="1.5" fill="#cdcdcd"/>
<rect x="663.0" y="602.2" width="8.0" height="10.6" fill="#b6a171"/>
<rect x="632.5" y="622.5" width="31" height="22" fill="none" stroke="#96ba92" stroke-width="1"/>
<path d="M635,625h5v5h-5zM637,624h1v7h-1zM634,627h7v1h-7z" fill="#800000"/>
<path d="M644,625h5v5h-5zM646,624h1v7h-1zM643,627h7v1h-7z" fill="#800000"/>
<path d="M654,625h5v5h-5zM656,624h1v7h-1zM653,627h7v1h-7z" fill="#800000"/>
<path d="M635,635h5v5h-5zM637,634h1v7h-1zM634,637h7v1h-7z" fill="#646464"/>
<path d="M644,635h5v5h-5zM646,634h1v7h-1zM643,637h7v1h-7z" fill="#800000"/>
<path d="M654,635h5v5h-5zM656,634h1v7h-1zM653,637h7v1h-7z" fill="#800000"/>
<rect x="592.5" y="632.5" width="29" height="40" fill="none" stroke="#96ba92" stroke-width="1"/>
<rect x="595" y="635" width="8" height="6" fill="#800000"/>
<rect x="610" y="635" width="8" height="6" fill="#646464"/>
<rect x="595" y="649" width="8" height="6" fill="#00868b"/>
<rect x="610" y="649" width="8" height="6" fill="#800000"/>
<rect x="595" y="663" width="8" height="6" fill="#800000"/>
<rect x="611" y="662" width="7" height="7" fill="#800000"/>
<text x="610" y="664" font-size="9" fill="#92b08c" text-anchor="start" textLength="22" lengthAdjust="spacingAndGlyphs" transform="rotate(-90 610 664)" >U7601</text>
<rect x="644.0" y="649.0" width="8.0" height="15.0" fill="#5e5e5e"/>
<rect x="644.7" y="649.7" width="6.6" height="1.6" fill="#cdcdcd"/>
<rect x="644.7" y="661.7" width="6.6" height="1.6" fill="#cdcdcd"/>
<rect x="644.7" y="651.3" width="6.6" height="10.4" fill="#0a0a0a"/>
<rect x="655.0" y="649.0" width="8.0" height="15.0" fill="#5e5e5e"/>
<rect x="655.7" y="649.7" width="6.6" height="1.6" fill="#cdcdcd"/>
<rect x="655.7" y="661.7" width="6.6" height="1.6" fill="#cdcdcd"/>
<rect x="655.7" y="651.3" width="6.6" height="10.4" fill="#0a0a0a"/>
<rect x="636.0" y="668.0" width="14.0" height="8.0" fill="#5e5e5e"/>
<rect x="636.7" y="668.7" width="1.5" height="6.6" fill="#cdcdcd"/>
<rect x="647.8" y="668.7" width="1.5" height="6.6" fill="#cdcdcd"/>
<rect x="638.2" y="668.0" width="9.6" height="8.0" fill="#b6a171"/>
<rect x="656.0" y="668.0" width="15.0" height="8.0" fill="#5e5e5e"/>
<rect x="656.7" y="668.7" width="1.6" height="6.6" fill="#cdcdcd"/>
<rect x="668.7" y="668.7" width="1.6" height="6.6" fill="#cdcdcd"/>
<rect x="658.3" y="668.0" width="10.5" height="8.0" fill="#b6a171"/>
<rect x="569.0" y="677.0" width="15.0" height="8.0" fill="#5e5e5e"/>
<rect x="569.7" y="677.7" width="1.6" height="6.6" fill="#cdcdcd"/>
<rect x="581.7" y="677.7" width="1.6" height="6.6" fill="#cdcdcd"/>
<rect x="571.3" y="677.0" width="10.5" height="8.0" fill="#b6a171"/>
<rect x="593.0" y="677.0" width="14.0" height="8.0" fill="#5e5e5e"/>
<rect x="593.7" y="677.7" width="1.5" height="6.6" fill="#cdcdcd"/>
<rect x="604.8" y="677.7" width="1.5" height="6.6" fill="#cdcdcd"/>
<rect x="595.2" y="677.0" width="9.6" height="8.0" fill="#b6a171"/>
<rect x="541.0" y="671.0" width="15.0" height="35.0" fill="#5e5e5e"/>
<rect x="541.7" y="671.7" width="13.6" height="4.5" fill="#cdcdcd"/>
<rect x="541.7" y="700.8" width="13.6" height="4.5" fill="#cdcdcd"/>
<rect x="541.0" y="676.2" width="15.0" height="24.5" fill="#b6a171"/>
<rect x="565" y="691" width="55" height="33" fill="#a3a394"/>
<circle cx="610.6" cy="707.9" r="5" fill="#ffffff"/>
<text x="575.7" y="713.1" font-size="13.8" fill="#7f9f7a" text-anchor="start" textLength="32" lengthAdjust="spacingAndGlyphs" >L4100</text>
<rect x="543.0" y="709.0" width="15.0" height="8.0" fill="#5e5e5e"/>
<rect x="543.7" y="709.7" width="1.5" height="6.6" fill="#cdcdcd"/>
<rect x="555.8" y="709.7" width="1.5" height="6.6" fill="#cdcdcd"/>
<rect x="545.2" y="709.0" width="10.6" height="8.0" fill="#b6a171"/>
<rect x="542.0" y="720.0" width="8.0" height="22.0" fill="#5e5e5e"/>
<rect x="542.7" y="720.7" width="6.6" height="2.6" fill="#cdcdcd"/>
<rect x="542.7" y="738.7" width="6.6" height="2.6" fill="#cdcdcd"/>
<rect x="542.0" y="723.3" width="8.0" height="15.5" fill="#b6a171"/>
<rect x="555.0" y="733.0" width="23.0" height="9.0" fill="#5e5e5e"/>
<rect x="555.7" y="733.7" width="2.6" height="7.6" fill="#cdcdcd"/>
<rect x="574.7" y="733.7" width="2.6" height="7.6" fill="#cdcdcd"/>
<rect x="558.3" y="733.0" width="16.4" height="9.0" fill="#b6a171"/>
<rect x="582.0" y="733.0" width="23.0" height="9.0" fill="#5e5e5e"/>
<rect x="582.7" y="733.7" width="2.7" height="7.6" fill="#cdcdcd"/>
<rect x="601.6" y="733.7" width="2.7" height="7.6" fill="#cdcdcd"/>
<rect x="585.4" y="733.0" width="16.3" height="9.0" fill="#b6a171"/>
<rect x="609.0" y="735.0" width="15.0" height="8.0" fill="#5e5e5e"/>
<rect x="609.7" y="735.7" width="1.6" height="6.6" fill="#cdcdcd"/>
<rect x="621.7" y="735.7" width="1.6" height="6.6" fill="#cdcdcd"/>
<rect x="611.3" y="735.0" width="10.5" height="8.0" fill="#b6a171"/>
<rect x="630.0" y="709.0" width="15.0" height="35.0" fill="#5e5e5e"/>
<rect x="630.7" y="709.7" width="13.6" height="4.5" fill="#cdcdcd"/>
<rect x="630.7" y="738.8" width="13.6" height="4.5" fill="#cdcdcd"/>
<rect x="630.0" y="714.2" width="15.0" height="24.6" fill="#b6a171"/>
<rect x="652.0" y="704.0" width="18.0" height="36.0" fill="#5e5e5e"/>
<rect x="652.7" y="704.7" width="16.6" height="4.7" fill="#cdcdcd"/>
<rect x="652.7" y="734.6" width="16.6" height="4.7" fill="#cdcdcd"/>
<rect x="652.0" y="709.4" width="18.0" height="25.3" fill="#b6a171"/>
<rect x="657.0" y="745.0" width="10.0" height="22.0" fill="#5e5e5e"/>
<rect x="657.7" y="745.7" width="8.6" height="2.6" fill="#cdcdcd"/>
<rect x="657.7" y="763.7" width="8.6" height="2.6" fill="#cdcdcd"/>
<rect x="657.0" y="748.3" width="10.0" height="15.5" fill="#b6a171"/>
<rect x="657.0" y="775.0" width="10.0" height="21.0" fill="#5e5e5e"/>
<rect x="657.7" y="775.7" width="8.6" height="2.6" fill="#cdcdcd"/>
<rect x="657.7" y="792.7" width="8.6" height="2.6" fill="#cdcdcd"/>
<rect x="657.0" y="778.3" width="10.0" height="14.5" fill="#b6a171"/>
<rect x="657.0" y="802.0" width="10.0" height="16.0" fill="#5e5e5e"/>
<rect x="657.7" y="802.7" width="8.6" height="1.7" fill="#cdcdcd"/>
<rect x="657.7" y="815.6" width="8.6" height="1.7" fill="#cdcdcd"/>
<rect x="657.7" y="804.4" width="8.6" height="11.2" fill="#0a0a0a"/>
<rect x="657.0" y="821.0" width="10.0" height="16.0" fill="#5e5e5e"/>
<rect x="657.7" y="821.7" width="8.6" height="1.7" fill="#cdcdcd"/>
<rect x="657.7" y="834.6" width="8.6" height="1.7" fill="#cdcdcd"/>
<rect x="657.7" y="823.4" width="8.6" height="11.2" fill="#0a0a0a"/>
<rect x="657.0" y="842.0" width="10.0" height="16.0" fill="#5e5e5e"/>
<rect x="657.7" y="842.7" width="8.6" height="1.7" fill="#cdcdcd"/>
<rect x="657.7" y="855.6" width="8.6" height="1.7" fill="#cdcdcd"/>
<rect x="657.0" y="844.4" width="10.0" height="11.3" fill="#b6a171"/>
<rect x="657.0" y="861.0" width="10.0" height="23.0" fill="#5e5e5e"/>
<rect x="657.7" y="861.7" width="8.6" height="2.7" fill="#cdcdcd"/>
<rect x="657.7" y="880.6" width="8.6" height="2.7" fill="#cdcdcd"/>
<rect x="657.0" y="864.4" width="10.0" height="16.3" fill="#b6a171"/>
<rect x="538.5" y="747.5" width="113" height="119" fill="none" stroke="#96ba92" stroke-width="1"/>
<path d="M542,753h5v5h-5zM544,752h1v7h-1zM541,755h7v1h-7z" fill="#800000"/>
<path d="M553,753h5v5h-5zM555,752h1v7h-1zM552,755h7v1h-7z" fill="#800000"/>
<path d="M564,753h5v5h-5zM566,752h1v7h-1zM563,755h7v1h-7z" fill="#800000"/>
<path d="M575,753h5v5h-5zM577,752h1v7h-1zM574,755h7v1h-7z" fill="#800000"/>
<path d="M586,753h5v5h-5zM588,752h1v7h-1zM585,755h7v1h-7z" fill="#800000"/>
<path d="M598,753h5v5h-5zM600,752h1v7h-1zM597,755h7v1h-7z" fill="#800000"/>
<path d="M609,753h5v5h-5zM611,752h1v7h-1zM608,755h7v1h-7z" fill="#800000"/>
<path d="M620,753h5v5h-5zM622,752h1v7h-1zM619,755h7v1h-7z" fill="#646464"/>
<path d="M631,753h5v5h-5zM633,752h1v7h-1zM630,755h7v1h-7z" fill="#800000"/>
<path d="M642,753h5v5h-5zM644,752h1v7h-1zM641,755h7v1h-7z" fill="#800000"/>
<path d="M542,764h5v5h-5zM544,763h1v7h-1zM541,766h7v1h-7z" fill="#800000"/>
<path d="M553,764h5v5h-5zM555,763h1v7h-1zM552,766h7v1h-7z" fill="#800000"/>
<path d="M564,764h5v5h-5zM566,763h1v7h-1zM563,766h7v1h-7z" fill="#800000"/>
<path d="M575,764h5v5h-5zM577,763h1v7h-1zM574,766h7v1h-7z" fill="#800000"/>
<path d="M586,764h5v5h-5zM588,763h1v7h-1zM585,766h7v1h-7z" fill="#800000"/>
<path d="M598,764h5v5h-5zM600,763h1v7h-1zM597,766h7v1h-7z" fill="#800000"/>
<path d="M609,764h5v5h-5zM611,763h1v7h-1zM608,766h7v1h-7z" fill="#800000"/>
<path d="M620,764h5v5h-5zM622,763h1v7h-1zM619,766h7v1h-7z" fill="#646464"/>
<path d="M631,764h5v5h-5zM633,763h1v7h-1zM630,766h7v1h-7z" fill="#800000"/>
<path d="M642,764h5v5h-5zM644,763h1v7h-1zM641,766h7v1h-7z" fill="#800000"/>
<path d="M542,775h5v5h-5zM544,774h1v7h-1zM541,777h7v1h-7z" fill="#800000"/>
<path d="M553,775h5v5h-5zM555,774h1v7h-1zM552,777h7v1h-7z" fill="#800000"/>
<path d="M564,775h5v5h-5zM566,774h1v7h-1zM563,777h7v1h-7z" fill="#800000"/>
<path d="M575,775h5v5h-5zM577,774h1v7h-1zM574,777h7v1h-7z" fill="#646464"/>
<path d="M586,775h5v5h-5zM588,774h1v7h-1zM585,777h7v1h-7z" fill="#646464"/>
<path d="M598,775h5v5h-5zM600,774h1v7h-1zM597,777h7v1h-7z" fill="#800000"/>
<path d="M609,775h5v5h-5zM611,774h1v7h-1zM608,777h7v1h-7z" fill="#800000"/>
<path d="M620,775h5v5h-5zM622,774h1v7h-1zM619,777h7v1h-7z" fill="#800000"/>
<path d="M631,775h5v5h-5zM633,774h1v7h-1zM630,777h7v1h-7z" fill="#800000"/>
<path d="M642,775h5v5h-5zM644,774h1v7h-1zM641,777h7v1h-7z" fill="#800000"/>
<path d="M542,786h5v5h-5zM544,785h1v7h-1zM541,788h7v1h-7z" fill="#800000"/>
<path d="M553,786h5v5h-5zM555,785h1v7h-1zM552,788h7v1h-7z" fill="#646464"/>
<path d="M564,786h5v5h-5zM566,785h1v7h-1zM563,788h7v1h-7z" fill="#800000"/>
<path d="M575,786h5v5h-5zM577,785h1v7h-1zM574,788h7v1h-7z" fill="#800000"/>
<path d="M586,786h5v5h-5zM588,785h1v7h-1zM585,788h7v1h-7z" fill="#800000"/>
<path d="M598,786h5v5h-5zM600,785h1v7h-1zM597,788h7v1h-7z" fill="#800000"/>
<path d="M609,786h5v5h-5zM611,785h1v7h-1zM608,788h7v1h-7z" fill="#800000"/>
<path d="M620,786h5v5h-5zM622,785h1v7h-1zM619,788h7v1h-7z" fill="#800000"/>
<path d="M631,786h5v5h-5zM633,785h1v7h-1zM630,788h7v1h-7z" fill="#800000"/>
<path d="M642,786h5v5h-5zM644,785h1v7h-1zM641,788h7v1h-7z" fill="#800000"/>
<path d="M542,797h5v5h-5zM544,796h1v7h-1zM541,799h7v1h-7z" fill="#800000"/>
<path d="M553,797h5v5h-5zM555,796h1v7h-1zM552,799h7v1h-7z" fill="#646464"/>
<path d="M564,797h5v5h-5zM566,796h1v7h-1zM563,799h7v1h-7z" fill="#800000"/>
<path d="M575,797h5v5h-5zM577,796h1v7h-1zM574,799h7v1h-7z" fill="#800000"/>
<path d="M586,797h5v5h-5zM588,796h1v7h-1zM585,799h7v1h-7z" fill="#800000"/>
<path d="M598,797h5v5h-5zM600,796h1v7h-1zM597,799h7v1h-7z" fill="#800000"/>
<path d="M609,797h5v5h-5zM611,796h1v7h-1zM608,799h7v1h-7z" fill="#800000"/>
<path d="M620,797h5v5h-5zM622,796h1v7h-1zM619,799h7v1h-7z" fill="#800000"/>
<path d="M631,797h5v5h-5zM633,796h1v7h-1zM630,799h7v1h-7z" fill="#800000"/>
<path d="M642,797h5v5h-5zM644,796h1v7h-1zM641,799h7v1h-7z" fill="#800000"/>
<path d="M542,808h5v5h-5zM544,807h1v7h-1zM541,810h7v1h-7z" fill="#800000"/>
<path d="M553,808h5v5h-5zM555,807h1v7h-1zM552,810h7v1h-7z" fill="#646464"/>
<path d="M564,808h5v5h-5zM566,807h1v7h-1zM563,810h7v1h-7z" fill="#800000"/>
<path d="M575,808h5v5h-5zM577,807h1v7h-1zM574,810h7v1h-7z" fill="#800000"/>
<path d="M586,808h5v5h-5zM588,807h1v7h-1zM585,810h7v1h-7z" fill="#800000"/>
<path d="M598,808h5v5h-5zM600,807h1v7h-1zM597,810h7v1h-7z" fill="#800000"/>
<path d="M609,808h5v5h-5zM611,807h1v7h-1zM608,810h7v1h-7z" fill="#800000"/>
<path d="M620,808h5v5h-5zM622,807h1v7h-1zM619,810h7v1h-7z" fill="#800000"/>
<path d="M631,808h5v5h-5zM633,807h1v7h-1zM630,810h7v1h-7z" fill="#800000"/>
<path d="M642,808h5v5h-5zM644,807h1v7h-1zM641,810h7v1h-7z" fill="#800000"/>
<path d="M542,819h5v5h-5zM544,818h1v7h-1zM541,821h7v1h-7z" fill="#800000"/>
<path d="M553,819h5v5h-5zM555,818h1v7h-1zM552,821h7v1h-7z" fill="#646464"/>
<path d="M564,819h5v5h-5zM566,818h1v7h-1zM563,821h7v1h-7z" fill="#800000"/>
<path d="M575,819h5v5h-5zM577,818h1v7h-1zM574,821h7v1h-7z" fill="#800000"/>
<path d="M586,819h5v5h-5zM588,818h1v7h-1zM585,821h7v1h-7z" fill="#800000"/>
<path d="M598,819h5v5h-5zM600,818h1v7h-1zM597,821h7v1h-7z" fill="#800000"/>
<path d="M609,819h5v5h-5zM611,818h1v7h-1zM608,821h7v1h-7z" fill="#800000"/>
<path d="M620,819h5v5h-5zM622,818h1v7h-1zM619,821h7v1h-7z" fill="#800000"/>
<path d="M631,819h5v5h-5zM633,818h1v7h-1zM630,821h7v1h-7z" fill="#800000"/>
<path d="M642,819h5v5h-5zM644,818h1v7h-1zM641,821h7v1h-7z" fill="#800000"/>
<path d="M542,830h5v5h-5zM544,829h1v7h-1zM541,832h7v1h-7z" fill="#800000"/>
<path d="M553,830h5v5h-5zM555,829h1v7h-1zM552,832h7v1h-7z" fill="#646464"/>
<path d="M564,830h5v5h-5zM566,829h1v7h-1zM563,832h7v1h-7z" fill="#800000"/>
<path d="M575,830h5v5h-5zM577,829h1v7h-1zM574,832h7v1h-7z" fill="#646464"/>
<path d="M586,830h5v5h-5zM588,829h1v7h-1zM585,832h7v1h-7z" fill="#800000"/>
<path d="M598,830h5v5h-5zM600,829h1v7h-1zM597,832h7v1h-7z" fill="#800000"/>
<path d="M609,830h5v5h-5zM611,829h1v7h-1zM608,832h7v1h-7z" fill="#800000"/>
<path d="M620,830h5v5h-5zM622,829h1v7h-1zM619,832h7v1h-7z" fill="#800000"/>
<path d="M631,830h5v5h-5zM633,829h1v7h-1zM630,832h7v1h-7z" fill="#646464"/>
<path d="M642,830h5v5h-5zM644,829h1v7h-1zM641,832h7v1h-7z" fill="#800000"/>
<path d="M542,842h5v5h-5zM544,841h1v7h-1zM541,844h7v1h-7z" fill="#800000"/>
<path d="M553,842h5v5h-5zM555,841h1v7h-1zM552,844h7v1h-7z" fill="#800000"/>
<path d="M564,842h5v5h-5zM566,841h1v7h-1zM563,844h7v1h-7z" fill="#800000"/>
<path d="M575,842h5v5h-5zM577,841h1v7h-1zM574,844h7v1h-7z" fill="#800000"/>
<path d="M586,842h5v5h-5zM588,841h1v7h-1zM585,844h7v1h-7z" fill="#800000"/>
<path d="M598,842h5v5h-5zM600,841h1v7h-1zM597,844h7v1h-7z" fill="#800000"/>
<path d="M609,842h5v5h-5zM611,841h1v7h-1zM608,844h7v1h-7z" fill="#800000"/>
<path d="M620,842h5v5h-5zM622,841h1v7h-1zM619,844h7v1h-7z" fill="#646464"/>
<path d="M631,842h5v5h-5zM633,841h1v7h-1zM630,844h7v1h-7z" fill="#800000"/>
<path d="M642,842h5v5h-5zM644,841h1v7h-1zM641,844h7v1h-7z" fill="#800000"/>
<path d="M542,853h5v5h-5zM544,852h1v7h-1zM541,855h7v1h-7z" fill="#800000"/>
<path d="M553,853h5v5h-5zM555,852h1v7h-1zM552,855h7v1h-7z" fill="#800000"/>
<path d="M564,853h5v5h-5zM566,852h1v7h-1zM563,855h7v1h-7z" fill="#800000"/>
<path d="M575,853h5v5h-5zM577,852h1v7h-1zM574,855h7v1h-7z" fill="#800000"/>
<path d="M586,853h5v5h-5zM588,852h1v7h-1zM585,855h7v1h-7z" fill="#800000"/>
<path d="M598,853h5v5h-5zM600,852h1v7h-1zM597,855h7v1h-7z" fill="#800000"/>
<path d="M609,853h5v5h-5zM611,852h1v7h-1zM608,855h7v1h-7z" fill="#800000"/>
<path d="M620,853h5v5h-5zM622,852h1v7h-1zM619,855h7v1h-7z" fill="#646464"/>
<path d="M631,853h5v5h-5zM633,852h1v7h-1zM630,855h7v1h-7z" fill="#800000"/>
<path d="M642,853h5v5h-5zM644,852h1v7h-1zM641,855h7v1h-7z" fill="#800000"/>
<text x="606" y="841.5" font-size="28" fill="#92b08c" text-anchor="start" textLength="71" lengthAdjust="spacingAndGlyphs" transform="rotate(-90 606 841.5)" >U4100</text>
<rect x="538.0" y="871.0" width="8.0" height="15.0" fill="#5e5e5e"/>
<rect x="538.7" y="871.7" width="6.6" height="1.6" fill="#cdcdcd"/>
<rect x="538.7" y="883.7" width="6.6" height="1.6" fill="#cdcdcd"/>
<rect x="538.0" y="873.3" width="8.0" height="10.5" fill="#b6a171"/>
<rect x="549.0" y="871.0" width="8.0" height="15.0" fill="#5e5e5e"/>
<rect x="549.7" y="871.7" width="6.6" height="1.6" fill="#cdcdcd"/>
<rect x="549.7" y="883.7" width="6.6" height="1.6" fill="#cdcdcd"/>
<rect x="549.0" y="873.3" width="8.0" height="10.5" fill="#b6a171"/>
<rect x="562.0" y="872.0" width="21.0" height="9.0" fill="#5e5e5e"/>
<rect x="562.7" y="872.7" width="2.6" height="7.6" fill="#cdcdcd"/>
<rect x="579.7" y="872.7" width="2.6" height="7.6" fill="#cdcdcd"/>
<rect x="565.3" y="872.0" width="14.5" height="9.0" fill="#b6a171"/>
<rect x="588.0" y="872.0" width="23.0" height="9.0" fill="#5e5e5e"/>
<rect x="588.7" y="872.7" width="2.7" height="7.6" fill="#cdcdcd"/>
<rect x="607.6" y="872.7" width="2.7" height="7.6" fill="#cdcdcd"/>
<rect x="591.4" y="872.0" width="16.3" height="9.0" fill="#b6a171"/>
<rect x="635.0" y="870.0" width="15.0" height="35.0" fill="#5e5e5e"/>
<rect x="635.7" y="870.7" width="13.6" height="4.5" fill="#cdcdcd"/>
<rect x="635.7" y="899.8" width="13.6" height="4.5" fill="#cdcdcd"/>
<rect x="635.0" y="875.2" width="15.0" height="24.5" fill="#b6a171"/>
<rect x="546.0" y="891.0" width="15.0" height="35.0" fill="#5e5e5e"/>
<rect x="546.7" y="891.7" width="13.6" height="4.5" fill="#cdcdcd"/>
<rect x="546.7" y="920.8" width="13.6" height="4.5" fill="#cdcdcd"/>
<rect x="546.0" y="896.2" width="15.0" height="24.5" fill="#b6a171"/>
<rect x="570" y="889" width="55" height="34" fill="#a3a394"/>
<circle cx="615.2" cy="906.2" r="5" fill="#ffffff"/>
<text x="581" y="911.2" font-size="13.8" fill="#7f9f7a" text-anchor="start" textLength="33" lengthAdjust="spacingAndGlyphs" >L4100</text>
<rect x="730.5" y="522.5" width="55" height="272" fill="none" stroke="#96ba92" stroke-width="1"/>
<rect x="730" y="531" width="14" height="9" fill="#800000"/>
<rect x="772" y="531" width="13" height="9" fill="#800000"/>
<rect x="730" y="650" width="17" height="7" fill="#800000"/>
<rect x="769" y="659" width="16" height="7" fill="#800000"/>
<rect x="730" y="777" width="14" height="8" fill="#800000"/>
<rect x="772" y="777" width="13" height="8" fill="#800000"/>
<text x="766.4" y="686.7" font-size="22" fill="#92b08c" text-anchor="start" textLength="53" lengthAdjust="spacingAndGlyphs" transform="rotate(-90 766.4 686.7)" >J3501</text>
<rect x="713.0" y="513.0" width="10.0" height="22.0" fill="#5e5e5e"/>
<rect x="713.7" y="513.7" width="8.6" height="2.6" fill="#cdcdcd"/>
<rect x="713.7" y="531.7" width="8.6" height="2.6" fill="#cdcdcd"/>
<rect x="713.0" y="516.3" width="10.0" height="15.4" fill="#b6a171"/>
<rect x="713.0" y="542.0" width="10.0" height="21.0" fill="#5e5e5e"/>
<rect x="713.7" y="542.7" width="8.6" height="2.6" fill="#cdcdcd"/>
<rect x="713.7" y="559.7" width="8.6" height="2.6" fill="#cdcdcd"/>
<rect x="713.0" y="545.3" width="10.0" height="14.5" fill="#b6a171"/>
<rect x="711.0" y="569.0" width="7.0" height="15.0" fill="#5e5e5e"/>
<rect x="711.7" y="569.7" width="5.6" height="1.6" fill="#cdcdcd"/>
<rect x="711.7" y="581.7" width="5.6" height="1.6" fill="#cdcdcd"/>
<rect x="711.0" y="571.3" width="7.0" height="10.5" fill="#b6a171"/>
<rect x="711.0" y="607.0" width="7.0" height="15.0" fill="#5e5e5e"/>
<rect x="711.7" y="607.7" width="5.6" height="1.5" fill="#cdcdcd"/>
<rect x="711.7" y="619.8" width="5.6" height="1.5" fill="#cdcdcd"/>
<rect x="711.0" y="609.2" width="7.0" height="10.6" fill="#b6a171"/>
<rect x="713.0" y="626.0" width="9.0" height="23.0" fill="#5e5e5e"/>
<rect x="713.7" y="626.7" width="7.6" height="2.7" fill="#cdcdcd"/>
<rect x="713.7" y="645.6" width="7.6" height="2.7" fill="#cdcdcd"/>
<rect x="713.0" y="629.4" width="9.0" height="16.3" fill="#b6a171"/>
<rect x="713.0" y="667.0" width="9.0" height="22.0" fill="#5e5e5e"/>
<rect x="713.7" y="667.7" width="7.6" height="2.6" fill="#cdcdcd"/>
<rect x="713.7" y="685.7" width="7.6" height="2.6" fill="#cdcdcd"/>
<rect x="713.0" y="670.3" width="9.0" height="15.4" fill="#b6a171"/>
<rect x="711.0" y="695.0" width="7.0" height="15.0" fill="#5e5e5e"/>
<rect x="711.7" y="695.7" width="5.6" height="1.5" fill="#cdcdcd"/>
<rect x="711.7" y="707.8" width="5.6" height="1.5" fill="#cdcdcd"/>
<rect x="711.0" y="697.2" width="7.0" height="10.6" fill="#b6a171"/>
<rect x="711.0" y="736.0" width="7.0" height="15.0" fill="#5e5e5e"/>
<rect x="711.7" y="736.7" width="5.6" height="1.5" fill="#cdcdcd"/>
<rect x="711.7" y="748.8" width="5.6" height="1.5" fill="#cdcdcd"/>
<rect x="711.0" y="738.2" width="7.0" height="10.6" fill="#b6a171"/>
<rect x="713.0" y="757.0" width="9.0" height="21.0" fill="#5e5e5e"/>
<rect x="713.7" y="757.7" width="7.6" height="2.6" fill="#cdcdcd"/>
<rect x="713.7" y="774.7" width="7.6" height="2.6" fill="#cdcdcd"/>
<rect x="713.0" y="760.3" width="9.0" height="14.5" fill="#b6a171"/>
<rect x="713.0" y="784.0" width="9.0" height="22.0" fill="#5e5e5e"/>
<rect x="713.7" y="784.7" width="7.6" height="2.6" fill="#cdcdcd"/>
<rect x="713.7" y="802.7" width="7.6" height="2.6" fill="#cdcdcd"/>
<rect x="713.0" y="787.3" width="9.0" height="15.4" fill="#b6a171"/>
<text x="381" y="492.3" font-size="9" fill="#8fa98b" text-anchor="start" textLength="21" lengthAdjust="spacingAndGlyphs" transform="rotate(-90 381 492.3)" >CA907</text>
<text x="404.6" y="492.3" font-size="9" fill="#8fa98b" text-anchor="start" textLength="21" lengthAdjust="spacingAndGlyphs" transform="rotate(-90 404.6 492.3)" >CA905</text>
<text x="486.7" y="475.6" font-size="9" fill="#8fa98b" text-anchor="start" textLength="22" lengthAdjust="spacingAndGlyphs" >CA904</text>
<text x="476.7" y="511.7" font-size="9" fill="#8fa98b" text-anchor="start" textLength="22" lengthAdjust="spacingAndGlyphs" >CA903</text>
<text x="339.4" y="609.7" font-size="9" fill="#8fa98b" text-anchor="start" textLength="22" lengthAdjust="spacingAndGlyphs" >CA909</text>
<text x="480.5" y="613" font-size="9" fill="#8fa98b" text-anchor="start" textLength="22" lengthAdjust="spacingAndGlyphs" >CA908</text>
<text x="476.7" y="652.3" font-size="9" fill="#8fa98b" text-anchor="start" textLength="22" lengthAdjust="spacingAndGlyphs" >CA914</text>
<text x="476.7" y="678.4" font-size="9" fill="#8fa98b" text-anchor="start" textLength="22" lengthAdjust="spacingAndGlyphs" >CA902</text>
<text x="554.3" y="697.7" font-size="9" fill="#8fa98b" text-anchor="start" textLength="21.7" lengthAdjust="spacingAndGlyphs" transform="rotate(-90 554.3 697.7)" >CA1111</text>
<text x="642" y="736" font-size="9" fill="#8fa98b" text-anchor="start" textLength="22.3" lengthAdjust="spacingAndGlyphs" transform="rotate(-90 642 736)" >CA4110</text>
<text x="663.7" y="732.6" font-size="9" fill="#8fa98b" text-anchor="start" textLength="22" lengthAdjust="spacingAndGlyphs" transform="rotate(-90 663.7 732.6)" >CA4197</text>
<text x="647.2" y="898" font-size="9" fill="#8fa98b" text-anchor="start" textLength="22" lengthAdjust="spacingAndGlyphs" transform="rotate(-90 647.2 898)" >CA4105</text>
<text x="557.7" y="918.4" font-size="9" fill="#8fa98b" text-anchor="start" textLength="22" lengthAdjust="spacingAndGlyphs" transform="rotate(-90 557.7 918.4)" >CA4100</text>
<rect x="336" y="937" width="7" height="2" fill="#8a8a8a"/>
<rect x="345" y="937" width="7" height="2" fill="#8a8a8a"/>
<rect x="356" y="937" width="7" height="2" fill="#8a8a8a"/>
<rect x="368" y="937" width="6" height="2" fill="#8a8a8a"/>
<rect x="378" y="937" width="7" height="2" fill="#8a8a8a"/>
<rect x="389" y="937" width="7" height="2" fill="#8a8a8a"/>
<rect x="400" y="937" width="7" height="2" fill="#8a8a8a"/>
<rect x="410" y="937" width="7" height="2" fill="#8a8a8a"/>
<rect x="421" y="937" width="7" height="2" fill="#8a8a8a"/>
<rect x="46.5" y="539.5" width="3" height="5" fill="none" stroke="#96ba92" stroke-width="0.8"/>
<rect x="47" y="543" width="2" height="1" fill="#800000"/>
<rect x="57.5" y="629.5" width="4" height="3" fill="none" stroke="#96ba92" stroke-width="0.8"/>
<rect x="58" y="631" width="3" height="1" fill="#800000"/>
<rect x="38.5" y="666.5" width="3" height="5" fill="none" stroke="#96ba92" stroke-width="0.8"/>
<rect x="39" y="670" width="2" height="1" fill="#800000"/>
<rect x="41.5" y="771.5" width="2" height="5" fill="none" stroke="#96ba92" stroke-width="0.8"/>
<rect x="42" y="775" width="2" height="1" fill="#800000"/>
<rect x="724.5" y="621.5" width="4" height="4" fill="none" stroke="#96ba92" stroke-width="0.8"/>
<rect x="726" y="624" width="2" height="1" fill="#800000"/>
<rect x="707.5" y="695.5" width="4" height="3" fill="none" stroke="#96ba92" stroke-width="0.8"/>
<rect x="708" y="697" width="3" height="1" fill="#800000"/>
<rect x="709.5" y="772.5" width="4" height="3" fill="none" stroke="#96ba92" stroke-width="0.8"/>
<rect x="710" y="774" width="3" height="1" fill="#800000"/>
<rect x="724.5" y="549.5" width="4" height="6" fill="none" stroke="#96ba92" stroke-width="0.8"/>
<rect x="726" y="554" width="2" height="1" fill="#800000"/>
</svg></div>
<div id="status"><span id="st" style="position:absolute;left:3px;top:4px;line-height:25px;display:block;transform-origin:0 0;transform:scaleX(0.84);font-size:25px;white-space:nowrap;color:#000">[GPIO_CPANEL_HALL_TO_PMU_IRQ_L]</span></div>
<div id="strip"></div><div id="gap"></div>
<div id="panel"></div>
<svg style="position:absolute;left:990px;top:400px" width="14" height="125" viewBox="990 400 14 125"><path d="M1001,406 L992.5,418.5 L992.5,503.5 L1001,516 Z" fill="#d9ebfc" stroke="#9cc9f2" stroke-width="1"/><path d="M995,460 L998.5,463.5 L995,467" fill="none" stroke="#4d9be6" stroke-width="1.2"/></svg>

<div id="topline"></div>
<div style="position:absolute;left:1289px;top:20px;width:2px;height:2px;background:#888"></div>
<div id="combo"><span style="display:inline-block;transform-origin:0 50%;transform:scaleX(0.83)">GPIO_CPANEL_HALL_TO_PMU_IRQ_L</span></div>
<div id="tbl">
<div class="row" style="top:0;background:#f3f4f6;border-bottom:none"><span style="left:52px">Code</span><span style="left:219px">PAD</span></div>
<div class="row" style="top:26px"><span style="left:4px">1</span><span style="left:48px">R8341</span><span style="left:219px">2</span></div>
<div class="row" style="top:52px"><span style="left:4px">2</span><span style="left:48px">TP93J6</span><span style="left:219px">1</span></div>
<div class="row" style="top:78px"><span style="left:4px">3</span><span style="left:48px">U2701</span><span style="left:219px">1</span></div>
<div class="row" style="top:104px;background:#c5e1fa;border-bottom:none"><span style="left:4px">4</span><span style="left:48px">U7650</span><span style="left:219px">3</span></div>
</div>
</body></html>
